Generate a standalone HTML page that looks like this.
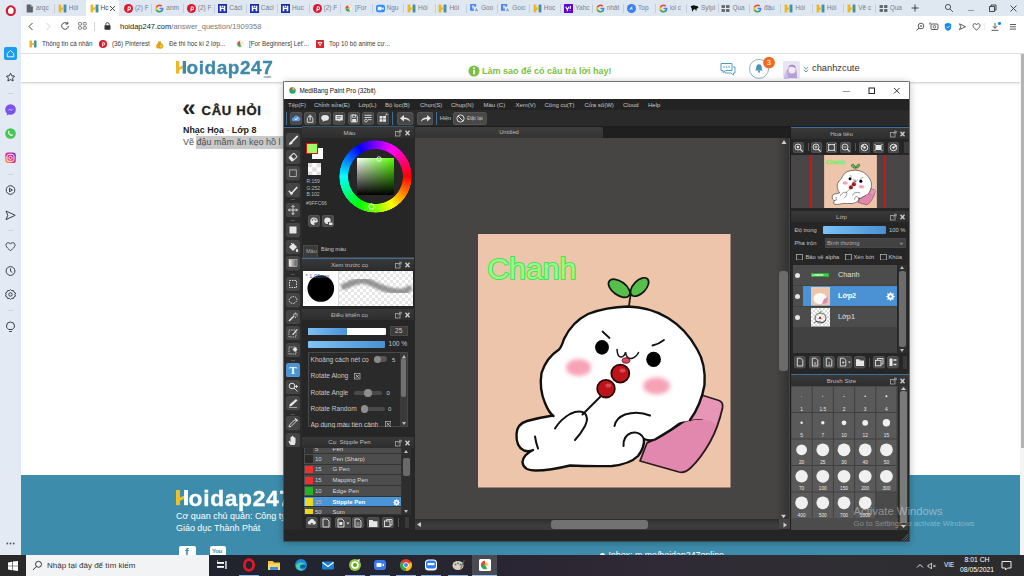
<!DOCTYPE html>
<html lang="vi">
<head>
<meta charset="utf-8">
<title>Hoidap247</title>
<style>
*{box-sizing:border-box;margin:0;padding:0}
html,body{width:1024px;height:576px;overflow:hidden;background:#fff;font-family:"Liberation Sans",sans-serif;}
#root{position:relative;width:1024px;height:576px;overflow:hidden;background:#fff}
#root div,#root svg,#root span{position:absolute;display:block}
.t{white-space:nowrap;line-height:1}
/* browser chrome */
#tabbar{left:0;top:0;width:1024px;height:16px;background:#dfe7f1}
#side{left:0;top:0;width:21px;height:555px;background:#e3eaf4}
.tab{top:0;height:16px;width:31px}
.tab .ic{left:0;top:4px;width:8px;height:8px}
.tab .tx{left:10.5px;top:5px;font-size:6.5px;color:#6d7380;white-space:nowrap;line-height:1;letter-spacing:-.1px}
.tsep{top:4px;width:1px;height:9px;background:#c6ced9}
#addr{left:21px;top:16px;width:1003px;height:20px;background:#fff}
#bm{left:21px;top:36px;width:1003px;height:18px;background:#fff;border-bottom:1px solid #e0e0e0}
.bmi{top:41px;font-size:6.3px;color:#3c3c3c;white-space:nowrap;line-height:1}
/* page */
#hdr{left:21px;top:54px;width:1003px;height:29px;background:#fff;border-bottom:1px solid #d9d9d9;box-shadow:0 1px 2px rgba(0,0,0,.10)}
#footer{left:21px;top:475px;width:999px;height:80px;background:#3e8cab}
#taskbar{left:0;top:555px;width:1024px;height:21px;background:linear-gradient(90deg,#1e222a 0%,#22252f 30%,#2a2532 50%,#2f2a35 65%,#2f2e33 82%,#2c2c2e 100%)}
</style>
</head>
<body>
<div id="root">
<div id="tabbar"></div>
<div style="left:86.400px;top:0;width:32.400px;height:16px;background:#fff;border-radius:2px 2px 0 0"></div>
<svg style="left:25.0px;top:3.5px;width:9px;height:9px" viewBox="0 0 16 16"><path d="M3 1h7l4 4v10H3z" fill="#5f6368"/><path d="M10 1v4h4z" fill="#9aa0a6"/></svg>
<span class="t" style="left:36.0px;top:5px;font-size:6.500px;color:#7a808c;width:16.500px;overflow:hidden">arqc</span>
<div class="tsep" style="left:54.0px"></div>
<svg style="left:57.5px;top:3.5px;width:9px;height:9px" viewBox="0 0 16 16"><rect x="1" y="1" width="5" height="14" fill="#e9b829"/><rect x="10" y="1" width="5" height="14" fill="#3b8fb0"/><path d="M5 7 L11 5 V9 L5 11z" fill="#e9b829"/></svg>
<span class="t" style="left:68.5px;top:5px;font-size:6.500px;color:#7a808c;width:16.500px;overflow:hidden">Hỏi </span>
<svg style="left:89.5px;top:3.5px;width:9px;height:9px" viewBox="0 0 16 16"><rect x="1" y="1" width="5" height="14" fill="#e9b829"/><rect x="10" y="1" width="5" height="14" fill="#3b8fb0"/><path d="M5 7 L11 5 V9 L5 11z" fill="#e9b829"/></svg>
<span class="t" style="left:100.5px;top:5px;font-size:6.500px;color:#444">Hc</span>
<svg style="left:109px;top:5px;width:7px;height:7px" viewBox="0 0 7 7"><path d="M1 1l5 5M6 1l-5 5" stroke="#333" stroke-width="0.900"/></svg>
<svg style="left:123.9px;top:3.5px;width:9px;height:9px" viewBox="0 0 16 16"><circle cx="8" cy="8" r="8" fill="#e0162b"/><path d="M6.800 13.200l.9-8.400h1.200a2.700 2.700 0 0 1 0 5.400H7.400" stroke="#fff" stroke-width="1.800" fill="none" stroke-linejoin="round"/></svg>
<span class="t" style="left:134.9px;top:5px;font-size:6.500px;color:#7a808c;width:16.500px;overflow:hidden">(2) F</span>
<div class="tsep" style="left:151.4px"></div>
<svg style="left:155.3px;top:3.5px;width:9px;height:9px" viewBox="0 0 16 16"><path d="M15 8.2c0-.5 0-1-.1-1.400H8v2.700h3.900c-.2 1-.7 1.700-1.500 2.200v1.900h2.400c1.400-1.300 2.200-3.200 2.200-5.400z" fill="#4285f4"/><path d="M8 15.300c2 0 3.700-.7 4.900-1.800l-2.400-1.900c-.7.400-1.500.7-2.500.7-1.900 0-3.600-1.300-4.100-3H1.400v1.900C2.600 13.700 5.100 15.300 8 15.300z" fill="#34a853"/><path d="M3.900 9.300c-.1-.4-.2-.9-.2-1.300s.1-.9.200-1.300V4.800H1.400C.9 5.800.6 6.900.6 8s.3 2.200.8 3.200l2.500-1.900z" fill="#fbbc05"/><path d="M8 3.600c1.100 0 2.100.4 2.800 1.100l2.100-2.100C11.700 1.400 10 .7 8 .7 5.100.7 2.600 2.300 1.400 4.800l2.500 1.900c.5-1.700 2.200-3.100 4.100-3.100z" fill="#ea4335"/></svg>
<span class="t" style="left:166.3px;top:5px;font-size:6.500px;color:#7a808c;width:16.500px;overflow:hidden">anm</span>
<div class="tsep" style="left:182.8px"></div>
<svg style="left:186.8px;top:3.5px;width:9px;height:9px" viewBox="0 0 16 16"><circle cx="8" cy="8" r="8" fill="#e0162b"/><path d="M6.800 13.200l.9-8.400h1.200a2.700 2.700 0 0 1 0 5.400H7.400" stroke="#fff" stroke-width="1.800" fill="none" stroke-linejoin="round"/></svg>
<span class="t" style="left:197.8px;top:5px;font-size:6.500px;color:#7a808c;width:16.500px;overflow:hidden">(2) F</span>
<div class="tsep" style="left:214.3px"></div>
<svg style="left:218.2px;top:3.5px;width:9px;height:9px" viewBox="0 0 16 16"><rect width="16" height="16" fill="#1c2fb0"/><path d="M3 3h3v10H3zM10 3h3v10h-3zM6 7h4v2H6z" fill="#fff"/><rect x="7" y="3" width="2" height="3" fill="#fff"/></svg>
<span class="t" style="left:229.2px;top:5px;font-size:6.500px;color:#7a808c;width:16.500px;overflow:hidden">Cácl</span>
<div class="tsep" style="left:245.8px"></div>
<svg style="left:249.7px;top:3.5px;width:9px;height:9px" viewBox="0 0 16 16"><rect width="16" height="16" fill="#1c2fb0"/><path d="M3 3h3v10H3zM10 3h3v10h-3zM6 7h4v2H6z" fill="#fff"/><rect x="7" y="3" width="2" height="3" fill="#fff"/></svg>
<span class="t" style="left:260.7px;top:5px;font-size:6.500px;color:#7a808c;width:16.500px;overflow:hidden">Cácl</span>
<div class="tsep" style="left:277.2px"></div>
<svg style="left:281.1px;top:3.5px;width:9px;height:9px" viewBox="0 0 16 16"><rect width="16" height="16" fill="#1c2fb0"/><path d="M3 3h3v10H3zM10 3h3v10h-3zM6 7h4v2H6z" fill="#fff"/><rect x="7" y="3" width="2" height="3" fill="#fff"/></svg>
<span class="t" style="left:292.1px;top:5px;font-size:6.500px;color:#7a808c;width:16.500px;overflow:hidden">Huc</span>
<div class="tsep" style="left:308.6px"></div>
<svg style="left:312.6px;top:3.5px;width:9px;height:9px" viewBox="0 0 16 16"><circle cx="8" cy="8" r="8" fill="#e0162b"/><path d="M6.800 13.200l.9-8.400h1.200a2.700 2.700 0 0 1 0 5.400H7.400" stroke="#fff" stroke-width="1.800" fill="none" stroke-linejoin="round"/></svg>
<span class="t" style="left:323.6px;top:5px;font-size:6.500px;color:#7a808c;width:16.500px;overflow:hidden">(2) F</span>
<div class="tsep" style="left:340.1px"></div>
<svg style="left:344.1px;top:3.5px;width:9px;height:9px" viewBox="0 0 16 16"><circle cx="8" cy="8" r="6.500" fill="#fff" stroke="#c9ccd2" stroke-width="1"/><path d="M8 2.500a5.500 5.500 0 0 0-5.500 5.500h5.500z" fill="#e04343"/><path d="M2.500 8a5.500 5.500 0 0 0 8.500 4.600L8 8z" fill="#3aa655"/><circle cx="9.500" cy="7" r="2" fill="#f2c230"/></svg>
<span class="t" style="left:355.1px;top:5px;font-size:6.500px;color:#7a808c;width:16.500px;overflow:hidden">[For</span>
<div class="tsep" style="left:371.6px"></div>
<svg style="left:375.5px;top:3.5px;width:9px;height:9px" viewBox="0 0 16 16"><rect x="0" y="1.500" width="16" height="13" rx="4" fill="#2d8cff"/><rect x="3" y="5" width="7" height="6" rx="1" fill="#fff"/><path d="M10.500 7.500l3-2v5l-3-2z" fill="#fff"/></svg>
<span class="t" style="left:386.5px;top:5px;font-size:6.500px;color:#7a808c;width:16.500px;overflow:hidden">Ngu</span>
<div class="tsep" style="left:403.0px"></div>
<svg style="left:407.0px;top:3.5px;width:9px;height:9px" viewBox="0 0 16 16"><rect x="1" y="1" width="5" height="14" fill="#e9b829"/><rect x="10" y="1" width="5" height="14" fill="#3b8fb0"/><path d="M5 7 L11 5 V9 L5 11z" fill="#e9b829"/></svg>
<span class="t" style="left:418.0px;top:5px;font-size:6.500px;color:#7a808c;width:16.500px;overflow:hidden">Hỏi </span>
<div class="tsep" style="left:434.5px"></div>
<svg style="left:438.4px;top:3.5px;width:9px;height:9px" viewBox="0 0 16 16"><rect x="1" y="1" width="5" height="14" fill="#e9b829"/><rect x="10" y="1" width="5" height="14" fill="#3b8fb0"/><path d="M5 7 L11 5 V9 L5 11z" fill="#e9b829"/></svg>
<span class="t" style="left:449.4px;top:5px;font-size:6.500px;color:#7a808c;width:16.500px;overflow:hidden">Hỏi </span>
<div class="tsep" style="left:465.9px"></div>
<svg style="left:469.9px;top:3.5px;width:9px;height:9px" viewBox="0 0 16 16"><rect x="0" y="0" width="11" height="12" rx="1" fill="#4a87ee"/><rect x="7" y="5" width="9" height="10" rx="1" fill="#e8eaed"/><path d="M3 3.500h5M5.500 2.500v1.500M4 4c.5 2 2 3.500 3.500 4M7 4c-.5 2-2 3.500-3.500 4" stroke="#fff" stroke-width="1.200" fill="none"/><path d="M9.500 13l2-5 2 5M10.200 11.500h2.600" stroke="#4a87ee" stroke-width="1.200" fill="none"/></svg>
<span class="t" style="left:480.9px;top:5px;font-size:6.500px;color:#7a808c;width:16.500px;overflow:hidden">Goo</span>
<div class="tsep" style="left:497.4px"></div>
<svg style="left:501.3px;top:3.5px;width:9px;height:9px" viewBox="0 0 16 16"><rect x="0" y="0" width="11" height="12" rx="1" fill="#4a87ee"/><rect x="7" y="5" width="9" height="10" rx="1" fill="#e8eaed"/><path d="M3 3.500h5M5.500 2.500v1.500M4 4c.5 2 2 3.500 3.500 4M7 4c-.5 2-2 3.500-3.500 4" stroke="#fff" stroke-width="1.200" fill="none"/><path d="M9.500 13l2-5 2 5M10.200 11.500h2.600" stroke="#4a87ee" stroke-width="1.200" fill="none"/></svg>
<span class="t" style="left:512.3px;top:5px;font-size:6.500px;color:#7a808c;width:16.500px;overflow:hidden">Goo:</span>
<div class="tsep" style="left:528.8px"></div>
<svg style="left:532.8px;top:3.5px;width:9px;height:9px" viewBox="0 0 16 16"><rect x="1" y="1" width="5" height="14" fill="#e9b829"/><rect x="10" y="1" width="5" height="14" fill="#3b8fb0"/><path d="M5 7 L11 5 V9 L5 11z" fill="#e9b829"/></svg>
<span class="t" style="left:543.8px;top:5px;font-size:6.500px;color:#7a808c;width:16.500px;overflow:hidden">Hoc</span>
<div class="tsep" style="left:560.2px"></div>
<svg style="left:564.2px;top:3.5px;width:9px;height:9px" viewBox="0 0 16 16"><rect width="16" height="16" rx="1" fill="#5f01d1"/><path d="M3 5l3 5v3M9 5l-3 5" stroke="#fff" stroke-width="2" fill="none"/><path d="M11.500 3l-.5 6M10.800 11.500v1" stroke="#fff" stroke-width="2" fill="none"/></svg>
<span class="t" style="left:575.2px;top:5px;font-size:6.500px;color:#7a808c;width:16.500px;overflow:hidden">Yahc</span>
<div class="tsep" style="left:591.7px"></div>
<svg style="left:595.6px;top:3.5px;width:9px;height:9px" viewBox="0 0 16 16"><path d="M15 8.2c0-.5 0-1-.1-1.400H8v2.700h3.900c-.2 1-.7 1.700-1.500 2.200v1.900h2.400c1.400-1.300 2.200-3.200 2.200-5.400z" fill="#4285f4"/><path d="M8 15.300c2 0 3.700-.7 4.900-1.800l-2.400-1.900c-.7.400-1.500.7-2.500.7-1.900 0-3.600-1.300-4.100-3H1.400v1.900C2.600 13.700 5.100 15.300 8 15.300z" fill="#34a853"/><path d="M3.900 9.300c-.1-.4-.2-.9-.2-1.300s.1-.9.200-1.300V4.800H1.400C.9 5.800.6 6.900.6 8s.3 2.200.8 3.200l2.500-1.900z" fill="#fbbc05"/><path d="M8 3.600c1.100 0 2.100.4 2.800 1.100l2.100-2.100C11.700 1.400 10 .7 8 .7 5.100.7 2.600 2.300 1.400 4.800l2.500 1.900c.5-1.700 2.200-3.100 4.100-3.100z" fill="#ea4335"/></svg>
<span class="t" style="left:606.6px;top:5px;font-size:6.500px;color:#7a808c;width:16.500px;overflow:hidden">nhât</span>
<div class="tsep" style="left:623.1px"></div>
<svg style="left:627.1px;top:3.5px;width:9px;height:9px" viewBox="0 0 16 16"><circle cx="8" cy="8" r="8" fill="#3b7ff0"/><path d="M4 11c1-4 3-6 6-7-1 2-1 4 1 7-2-2-4-2-7 0z" fill="#cfe0ff"/></svg>
<span class="t" style="left:638.1px;top:5px;font-size:6.500px;color:#7a808c;width:16.500px;overflow:hidden">Top</span>
<div class="tsep" style="left:654.6px"></div>
<svg style="left:658.5px;top:3.5px;width:9px;height:9px" viewBox="0 0 16 16"><path d="M15 8.2c0-.5 0-1-.1-1.400H8v2.700h3.900c-.2 1-.7 1.700-1.500 2.200v1.900h2.400c1.400-1.300 2.200-3.200 2.200-5.400z" fill="#4285f4"/><path d="M8 15.300c2 0 3.700-.7 4.900-1.800l-2.400-1.900c-.7.400-1.500.7-2.500.7-1.900 0-3.600-1.300-4.100-3H1.400v1.900C2.600 13.700 5.100 15.300 8 15.300z" fill="#34a853"/><path d="M3.900 9.300c-.1-.4-.2-.9-.2-1.300s.1-.9.200-1.300V4.800H1.400C.9 5.800.6 6.900.6 8s.3 2.200.8 3.200l2.500-1.900z" fill="#fbbc05"/><path d="M8 3.600c1.100 0 2.100.4 2.800 1.100l2.100-2.100C11.700 1.400 10 .7 8 .7 5.100.7 2.600 2.300 1.400 4.800l2.500 1.900c.5-1.700 2.200-3.100 4.100-3.100z" fill="#ea4335"/></svg>
<span class="t" style="left:669.5px;top:5px;font-size:6.500px;color:#7a808c;width:16.500px;overflow:hidden">lol c</span>
<div class="tsep" style="left:686.0px"></div>
<svg style="left:690.0px;top:3.5px;width:9px;height:9px" viewBox="0 0 16 16"><path d="M1 4l5-2 8 2 1 3-3 1-1 5-2-4-3 1-2 4-1-6z" fill="#111"/></svg>
<span class="t" style="left:701.0px;top:5px;font-size:6.500px;color:#7a808c;width:16.500px;overflow:hidden">Sylpl</span>
<div class="tsep" style="left:717.5px"></div>
<svg style="left:721.4px;top:3.5px;width:9px;height:9px" viewBox="0 0 16 16"><rect x="1" y="2" width="6" height="5" fill="#5f6368"/><rect x="9" y="2" width="6" height="5" fill="#5f6368"/><rect x="1" y="9" width="6" height="5" fill="#5f6368"/><rect x="9" y="9" width="6" height="5" fill="#5f6368"/></svg>
<span class="t" style="left:732.4px;top:5px;font-size:6.500px;color:#7a808c;width:16.500px;overflow:hidden">Qua</span>
<div class="tsep" style="left:748.9px"></div>
<svg style="left:752.9px;top:3.5px;width:9px;height:9px" viewBox="0 0 16 16"><path d="M15 8.2c0-.5 0-1-.1-1.400H8v2.700h3.900c-.2 1-.7 1.700-1.500 2.200v1.900h2.400c1.400-1.300 2.200-3.200 2.200-5.400z" fill="#4285f4"/><path d="M8 15.300c2 0 3.700-.7 4.900-1.800l-2.400-1.900c-.7.400-1.500.7-2.500.7-1.900 0-3.600-1.300-4.100-3H1.400v1.900C2.600 13.700 5.100 15.300 8 15.300z" fill="#34a853"/><path d="M3.900 9.300c-.1-.4-.2-.9-.2-1.300s.1-.9.200-1.300V4.800H1.400C.9 5.800.6 6.900.6 8s.3 2.200.8 3.200l2.500-1.900z" fill="#fbbc05"/><path d="M8 3.600c1.100 0 2.100.4 2.800 1.100l2.100-2.100C11.700 1.400 10 .7 8 .7 5.100.7 2.600 2.300 1.400 4.800l2.500 1.900c.5-1.700 2.200-3.100 4.100-3.100z" fill="#ea4335"/></svg>
<span class="t" style="left:763.9px;top:5px;font-size:6.500px;color:#7a808c;width:16.500px;overflow:hidden">đậu</span>
<div class="tsep" style="left:780.4px"></div>
<svg style="left:784.3px;top:3.5px;width:9px;height:9px" viewBox="0 0 16 16"><rect x="1" y="1" width="5" height="14" fill="#e9b829"/><rect x="10" y="1" width="5" height="14" fill="#3b8fb0"/><path d="M5 7 L11 5 V9 L5 11z" fill="#e9b829"/></svg>
<span class="t" style="left:795.3px;top:5px;font-size:6.500px;color:#7a808c;width:16.500px;overflow:hidden">Hỏi </span>
<div class="tsep" style="left:811.8px"></div>
<svg style="left:815.8px;top:3.5px;width:9px;height:9px" viewBox="0 0 16 16"><rect x="1" y="1" width="5" height="14" fill="#e9b829"/><rect x="10" y="1" width="5" height="14" fill="#3b8fb0"/><path d="M5 7 L11 5 V9 L5 11z" fill="#e9b829"/></svg>
<span class="t" style="left:826.8px;top:5px;font-size:6.500px;color:#7a808c;width:16.500px;overflow:hidden">Hỏi </span>
<div class="tsep" style="left:843.3px"></div>
<svg style="left:847.2px;top:3.5px;width:9px;height:9px" viewBox="0 0 16 16"><rect x="1" y="1" width="5" height="14" fill="#e9b829"/><rect x="10" y="1" width="5" height="14" fill="#3b8fb0"/><path d="M5 7 L11 5 V9 L5 11z" fill="#e9b829"/></svg>
<span class="t" style="left:858.2px;top:5px;font-size:6.500px;color:#7a808c;width:16.500px;overflow:hidden">Vẽ c</span>
<div class="tsep" style="left:874.8px"></div>
<svg style="left:878.7px;top:3.5px;width:9px;height:9px" viewBox="0 0 16 16"><rect x="1" y="2" width="6" height="5" fill="#5f6368"/><rect x="9" y="2" width="6" height="5" fill="#5f6368"/><rect x="1" y="9" width="6" height="5" fill="#5f6368"/><rect x="9" y="9" width="6" height="5" fill="#5f6368"/></svg>
<span class="t" style="left:889.7px;top:5px;font-size:6.500px;color:#7a808c;width:16.500px;overflow:hidden">Qua</span>
<svg style="left:910px;top:3px;width:10px;height:10px" viewBox="0 0 10 10"><path d="M5 1.500v7M1.500 5h7" stroke="#333" stroke-width="0.900"/></svg>
<svg style="left:944px;top:3px;width:10px;height:10px" viewBox="0 0 10 10"><circle cx="4" cy="4" r="2.600" stroke="#444" stroke-width="0.900" fill="none"/><path d="M6 6l3 3" stroke="#444" stroke-width="0.900"/></svg>
<div style="left:968px;top:10px;width:6px;height:1px;background:#999"></div>
<svg style="left:987px;top:3px;width:10px;height:10px" viewBox="0 0 10 10"><path d="M2.500 3.500h5v5h-5zM4 3.500v-1.500h5v5h-1.500" stroke="#333" stroke-width="0.900" fill="none"/></svg>
<svg style="left:1009px;top:4px;width:9px;height:9px" viewBox="0 0 9 9"><path d="M1.500 1.500l6 6M7.500 1.500l-6 6" stroke="#333" stroke-width="0.900"/></svg>
<div id="addr"></div>
<svg style="left:27px;top:22px;width:8px;height:9px" viewBox="0 0 8 9"><path d="M5.500 1L2 4.500 5.500 8" stroke="#333" stroke-width="0.900" fill="none"/></svg>
<svg style="left:44px;top:22px;width:8px;height:9px" viewBox="0 0 8 9"><path d="M2.500 1L6 4.500 2.500 8" stroke="#c8c8c8" stroke-width="0.900" fill="none"/></svg>
<svg style="left:60px;top:21px;width:10px;height:10px" viewBox="0 0 10 10"><path d="M8.300 5a3.300 3.300 0 1 1-1-2.400" stroke="#333" stroke-width="0.900" fill="none"/><path d="M7.800 0.800v2.200h-2.200" stroke="#333" stroke-width="0.900" fill="none"/></svg>
<svg style="left:78px;top:22px;width:9px;height:8px" viewBox="0 0 9 8"><rect x="0.500" y="0.500" width="3" height="2.600" rx="0.800" stroke="#444" stroke-width="0.700" fill="none"/><rect x="5.300" y="0.500" width="3" height="2.600" rx="0.800" stroke="#444" stroke-width="0.700" fill="none"/><rect x="0.500" y="4.600" width="3" height="2.600" rx="0.800" stroke="#444" stroke-width="0.700" fill="none"/><rect x="5.300" y="4.600" width="3" height="2.600" rx="0.800" stroke="#444" stroke-width="0.700" fill="none"/></svg>
<div style="left:94px;top:22px;width:1px;height:9px;background:#d5d5d5"></div>
<svg style="left:104px;top:22px;width:7px;height:8px" viewBox="0 0 7 8"><rect x="0.500" y="3.200" width="6" height="4.500" rx="0.600" fill="#333"/><path d="M1.800 3.500v-1.200a1.700 1.700 0 0 1 3.400 0v1.200" stroke="#333" stroke-width="0.900" fill="none"/></svg>
<span class="t" style="left:120px;top:23px;font-size:7.500px;color:#222">hoidap247.com<span style="position:static;display:inline;color:#777">/answer_question/1909358</span></span>
<svg style="left:914px;top:22px;width:110px;height:10px" viewBox="0 0 110 10"><circle cx="7" cy="4" r="2.800" stroke="#333" stroke-width="0.800" fill="none"/><path d="M5 6l-2.500 2.500" stroke="#333" stroke-width="0.900"/><path d="M6 4h2M7 3v2" stroke="#333" stroke-width="0.600"/><rect x="17" y="2" width="7" height="5.500" rx="1" stroke="#333" stroke-width="0.800" fill="none"/><circle cx="20.500" cy="4.800" r="1.300" stroke="#333" stroke-width="0.700" fill="none"/><path d="M15.800 2.500v-1.500h1.500" stroke="#333" stroke-width="0.700" fill="none"/><path d="M34 0.800l3.200 1.200v3c0 2-1.500 3.300-3.200 4-1.700-.7-3.200-2-3.200-4v-3z" fill="#1a8cf0"/><path d="M32.500 4.800l1.100 1.100 2-2.100" stroke="#fff" stroke-width="0.800" fill="none"/><path d="M45.500 1.800l6 2.900-6 2.900 1.200-2.900z" stroke="#333" stroke-width="0.800" fill="none" stroke-linejoin="round"/><path d="M62.500 8c-3-2-3.500-3.500-3.500-4.600 0-2 2.600-2.400 3.500-.6.900-1.800 3.500-1.400 3.500.6 0 1.100-.5 2.600-3.500 4.600z" stroke="#333" stroke-width="0.800" fill="none"/><rect x="70.500" y="1" width="0.600" height="7" fill="#ddd"/><path d="M81 1v5M78.800 4.200L81 6.400l2.200-2.200M77.500 8.300h7" stroke="#333" stroke-width="0.800" fill="none"/><circle cx="85.500" cy="1.500" r="1.600" fill="#1a8cf0"/><path d="M96 2.500h6M96 4.800h6M96 7.100h6" stroke="#333" stroke-width="0.800"/></svg>
<div id="bm"></div>
<svg style="left:29px;top:40px;width:8px;height:8px" viewBox="0 0 16 16"><rect x="1" y="1" width="5" height="14" fill="#e9b829"/><rect x="10" y="1" width="5" height="14" fill="#3b8fb0"/><path d="M5 7 L11 5 V9 L5 11z" fill="#e9b829"/></svg>
<span class="bmi" style="left:42px">Thông tin cá nhân</span>
<svg style="left:99px;top:40px;width:8px;height:8px" viewBox="0 0 16 16"><circle cx="8" cy="8" r="8" fill="#e0162b"/><path d="M6.800 13.200l.9-8.400h1.200a2.700 2.700 0 0 1 0 5.400H7.400" stroke="#fff" stroke-width="1.800" fill="none" stroke-linejoin="round"/></svg>
<span class="bmi" style="left:112px">(36) Pinterest</span>
<svg style="left:155px;top:40px;width:9px;height:9px" viewBox="0 0 16 16"><path d="M5 5c0-2 6-2 6 0l2 3c2 3 1 7-2 7H5c-3 0-4-4-2-7z" fill="#e2a81e"/><circle cx="11" cy="11" r="3.500" fill="#f4c63d" stroke="#b7820b" stroke-width=".8"/><path d="M6 2l2 2 2-2" stroke="#b7820b" stroke-width="1.500" fill="none"/></svg>
<span class="bmi" style="left:169px">Đề thi học kì 2 lớp...</span>
<svg style="left:236px;top:40px;width:8px;height:8px" viewBox="0 0 16 16"><circle cx="8" cy="8" r="6.500" fill="#fff" stroke="#c9ccd2" stroke-width="1"/><path d="M8 2.500a5.500 5.500 0 0 0-5.500 5.500h5.500z" fill="#e04343"/><path d="M2.500 8a5.500 5.500 0 0 0 8.500 4.600L8 8z" fill="#3aa655"/><circle cx="9.500" cy="7" r="2" fill="#f2c230"/></svg>
<span class="bmi" style="left:249px">[For Beginners] Let'...</span>
<svg style="left:316px;top:40px;width:8px;height:8px" viewBox="0 0 16 16"><rect x="0" y="0" width="16" height="16" rx="1" fill="#d8262c"/><path d="M3 4h10l-5 9z" fill="#fff"/><path d="M6 6h4l-2 4z" fill="#d8262c"/></svg>
<span class="bmi" style="left:329px">Top 10 bộ anime cự...</span>
<div id="hdr"></div>
<svg style="left:176px;top:60.8px;width:11px;height:13.7px" viewBox="0 0 11 13.7"><rect x="0" y="0" width="3.30" height="12.65" fill="#ecb922"/><path d="M3.10 6.33 L6.90 4.55 V7.34 L3.10 9.11z" fill="#ecb922"/><rect x="6.70" y="0" width="3.30" height="12.65" fill="#3f8aa8"/></svg>
<span class="t" style="left:186.6px;top:58.78px;font-size:19px;font-weight:bold;color:#3f8aa8;letter-spacing:0.55px;transform:scaleY(0.93);transform-origin:0 0;-webkit-text-stroke:.35px #3f8aa8">oidap247</span>
<span class="t" style="left:263px;top:75.500px;font-size:3.500px;font-weight:bold;color:#3f8aa8">.com</span>
<svg style="left:468px;top:64.500px;width:12px;height:12px" viewBox="0 0 12 12"><circle cx="6" cy="6" r="5.500" fill="#7cc043"/><rect x="5.200" y="5" width="1.700" height="4.300" fill="#fff"/><circle cx="6" cy="3.300" r="1" fill="#fff"/></svg>
<span class="t" style="left:482px;top:66.500px;font-size:9px;font-weight:bold;color:#7cc043">Làm sao để có câu trả lời hay!</span>
<svg style="left:720px;top:62px;width:16px;height:14px" viewBox="0 0 16 14"><path d="M5 9.500v1.500h6l2.500 2v-2h1.500v-6h-2" stroke="#4d9bc0" stroke-width="0.900" fill="#fff"/><path d="M1 1.500h11v7H5.500L3 10.500v-2H1z" stroke="#4d9bc0" stroke-width="1" fill="#fff" stroke-linejoin="round"/><circle cx="4" cy="5" r=".8" fill="#4d9bc0"/><circle cx="6.500" cy="5" r=".8" fill="#4d9bc0"/><circle cx="9" cy="5" r=".8" fill="#4d9bc0"/></svg>
<svg style="left:748px;top:56px;width:28px;height:24px" viewBox="0 0 28 24"><circle cx="11" cy="12.900" r="9.500" stroke="#5b93a8" stroke-width="0.700" fill="#fff"/><g transform="translate(11 12.500) scale(.84) translate(-11 -12.500)"><path d="M11 7.500c2.200 0 3.300 1.700 3.300 3.800 0 2 .5 3 1.500 3.700H6.200c1-.7 1.500-1.700 1.500-3.700 0-2.100 1.100-3.800 3.300-3.800z" fill="#4a94b4"/><circle cx="11" cy="16.300" r="1.300" fill="#4a94b4"/></g><circle cx="21" cy="6.600" r="5.900" fill="#f26a21"/></svg>
<span class="t" style="left:766.800px;top:58.800px;font-size:7.500px;color:#fff">3</span>
<svg style="left:783px;top:61px;width:17px;height:18px" viewBox="0 0 17 18"><rect width="17" height="18" rx="2" fill="#e9e4f3"/><path d="M3 17c0-6 1-11 5-12 5-1 6 4 6 12z" fill="#b7a3dc"/><circle cx="9" cy="9" r="3.500" fill="#f3e9ee"/><path d="M1 18c0-4 1-8 3-9l1 9z" fill="#cfc2ea"/><path d="M5 6c2-3 7-3 8 1-2-1-5-2-8-1z" fill="#9b86cf"/></svg>
<svg style="left:803px;top:66px;width:6px;height:7px" viewBox="0 0 6 7"><path d="M.8 1l2.200 2.200L5.200 1M.8 3.800l2.200 2.200 2.200-2.200" stroke="#4b8b9f" stroke-width="0.900" fill="none"/></svg>
<span class="t" style="left:812px;top:64px;font-size:9.300px;color:#333">chanhzcute</span>
<span class="t" style="left:182.300px;top:95.600px;font-size:24px;font-weight:bold;color:#222">«</span>
<span class="t" style="left:201.500px;top:103.700px;font-size:13.100px;font-weight:bold;color:#222;letter-spacing:.7px;-webkit-text-stroke:.3px #222">CÂU HỎI</span>
<span class="t" style="left:183px;top:125.500px;font-size:8.900px;font-weight:bold;color:#222">Nhạc Họa <span style="position:static;display:inline;font-weight:normal;color:#888">·</span> Lớp 8</span>
<div style="left:196px;top:136px;width:88px;height:12.800px;background:#c9c9c9"></div>
<span class="t" style="left:183px;top:137.900px;font-size:9px;color:#505050">Vẽ đậu mầm ăn kẹo hồ l</span>
<div style="left:1020px;top:54px;width:4px;height:501px;background:#f4f4f4"></div>
<div style="left:1020.500px;top:54px;width:3.500px;height:394px;background:#b4b4b4"></div>
<div id="footer"></div>
<svg style="left:176px;top:490px;width:13px;height:16.2px" viewBox="0 0 13 16.2"><rect x="0" y="0" width="3.96" height="15.18" fill="#f0c02a"/><path d="M3.76 7.59 L8.24 5.47 V8.81 L3.76 10.93z" fill="#f0c02a"/><rect x="8.04" y="0" width="3.96" height="15.18" fill="#fff"/></svg>
<span class="t" style="left:188.6px;top:487.57px;font-size:22.8px;font-weight:bold;color:#fff;letter-spacing:0.66px;transform:scaleY(0.93);transform-origin:0 0;-webkit-text-stroke:.35px #fff">oidap247</span>
<span class="t" style="left:176px;top:511.700px;font-size:8.950px;color:#fff">Cơ quan chủ quản: Công ty</span>
<span class="t" style="left:176px;top:523.900px;font-size:8.950px;color:#fff">Giáo dục Thành Phát</span>
<div style="left:179px;top:546px;width:17px;height:12px;background:#fff;border-radius:2px"></div>
<span class="t" style="left:185px;top:547px;font-size:11px;font-weight:bold;color:#3e8cab">f</span>
<div style="left:210px;top:546px;width:16px;height:12px;background:#fff;border-radius:2px"></div>
<span class="t" style="left:212px;top:547.500px;font-size:6px;font-weight:bold;color:#3e8cab;letter-spacing:-.3px">You</span>
<div style="left:599.500px;top:552.500px;width:5px;height:5px;border-radius:3px;background:#fff"></div>
<span class="t" style="left:608.500px;top:550.500px;font-size:8.800px;color:#fff">Inbox: m.me/hoidap247online</span>
<div id="side"></div>
<svg style="left:0;top:0;width:21px;height:555px" viewBox="0 0 21 555"><ellipse cx="10.800" cy="10.700" rx="4" ry="4.300" fill="#fff" stroke="#d8142c" stroke-width="2.200"/><ellipse cx="10.800" cy="10.700" rx="2" ry="3.400" fill="#fff"/><rect x="4" y="47" width="13" height="13" rx="2" fill="#1c9bf0"/><path d="M7.300 53.500l3.200-3 3.200 3v3.300H7.300z" stroke="#fff" stroke-width="0.900" fill="none" stroke-linejoin="round"/><path d="M10.500 73.200l1.300 2.600 2.800.3-2 2 .5 2.900-2.600-1.400-2.600 1.400.5-2.900-2-2 2.800-.3z" stroke="#3b3f46" stroke-width="1" fill="none" stroke-linejoin="round"/><rect x="8" y="93" width="5" height="0.800" fill="#c3cbd6"/><circle cx="10.500" cy="109.500" r="5.300" fill="#7a52f4"/><path d="M7.500 111.200l2.200-2.500 1.500 1.300 2.300-1.800-2.200 2.600-1.500-1.300z" fill="#fff"/><path d="M7 113.500l-.3 2 2-1z" fill="#7a52f4"/><circle cx="10.500" cy="133.500" r="5.300" fill="#45c655"/><path d="M8.300 131.200c.3-.5.900-.4 1 .1l.3.900-.5.600c.5.900 1.100 1.500 2 2l.6-.5.900.3c.5.100.6.700.1 1-2.100 1.300-5.700-2.300-4.400-4.400z" fill="#fff"/><defs><linearGradient id="ig" x1="0" y1="1" x2="1" y2="0"><stop offset="0" stop-color="#f9c234"/><stop offset=".45" stop-color="#ee2a7b"/><stop offset="1" stop-color="#6a2ed8"/></linearGradient></defs><rect x="5.200" y="152.500" width="10.600" height="10.600" rx="2.800" fill="url(#ig)"/><rect x="7" y="154.300" width="7" height="7" rx="2" stroke="#fff" stroke-width="0.900" fill="none"/><circle cx="10.500" cy="157.800" r="1.600" stroke="#fff" stroke-width="0.900" fill="none"/><rect x="8" y="174" width="5" height="0.800" fill="#c3cbd6"/><circle cx="10.500" cy="190" r="4.300" stroke="#3b3f46" stroke-width="1" fill="none"/><path d="M9.500 188.200l2.800 1.800-2.800 1.800z" stroke="#3b3f46" stroke-width="1" fill="none" stroke-width="0.800"/><path d="M6 211l9.200 4.300L6 219.600l1.800-4.300z" stroke="#3b3f46" stroke-width="1" fill="none" stroke-linejoin="round"/><rect x="8" y="230" width="5" height="0.800" fill="#c3cbd6"/><path d="M10.500 250.500c-3.600-2.400-4.500-4.200-4.500-5.600 0-2.500 3.300-3 4.500-.8 1.200-2.200 4.500-1.700 4.500.8 0 1.400-.9 3.200-4.500 5.600z" stroke="#3b3f46" stroke-width="1" fill="none"/><circle cx="10.500" cy="271" r="4.400" stroke="#3b3f46" stroke-width="1" fill="none"/><path d="M10.500 268.300v2.900l1.800 1.200" stroke="#3b3f46" stroke-width="1" fill="none"/><circle cx="10.500" cy="294.500" r="1.700" stroke="#3b3f46" stroke-width="1" fill="none"/><path d="M10.500 289.500l1.200 1.200 1.700-.2.600 1.600 1.500.9-.6 1.500.6 1.600-1.500.8-.6 1.600-1.700-.2-1.200 1.200-1.200-1.200-1.700.2-.6-1.600-1.500-.8.600-1.600-.6-1.500 1.500-.9.600-1.600 1.700.2z" stroke="#3b3f46" stroke-width="1" fill="none" stroke-width="0.800" stroke-linejoin="round"/><rect x="8" y="310" width="5" height="0.800" fill="#c3cbd6"/><path d="M8.800 329.500c-1.500-1-2.300-2-2.300-3.500a4 4 0 0 1 8 0c0 1.500-.8 2.500-2.300 3.500z" stroke="#3b3f46" stroke-width="1" fill="none"/><path d="M9.200 331.500h2.600" stroke="#3b3f46" stroke-width="1" fill="none"/><circle cx="7.300" cy="543.500" r="0.900" fill="#555"/><circle cx="10.500" cy="543.500" r="0.900" fill="#555"/><circle cx="13.700" cy="543.500" r="0.900" fill="#555"/></svg>
<div style="left:284px;top:82px;width:625px;height:459px;background:#262626;box-shadow:0 1px 8px rgba(0,0,0,.33),0 0 0 .7px #4a4a4a"></div>
<div style="left:284px;top:82px;width:625px;height:17px;background:#fff;"></div>
<svg style="left:288.8px;top:87.2px;width:7px;height:7px" viewBox="0 0 7 7"><circle cx="3.500" cy="3.500" r="3.200" fill="#1fa86c"/><path d="M3.500 .3A3.200 3.200 0 0 0 .5 2.600L3.500 3.500z" fill="#e04848"/><path d="M3.500 .3a3.200 3.200 0 0 1 2.800 1.700L3.500 3.500z" fill="#f0c23a"/><circle cx="3.700" cy="3.900" r="1.500" fill="#22b074"/></svg>
<span class="t" style="left:299.5px;top:88.3px;font-size:6.35px;color:#111;">MediBang Paint Pro (32bit)</span>
<div style="left:843px;top:91px;width:7px;height:1px;background:#999;"></div>
<svg style="left:868px;top:87px;width:8px;height:8px" viewBox="0 0 8 8"><rect x="1" y="1" width="5.500" height="5.500" stroke="#222" stroke-width="1" fill="none"/></svg>
<svg style="left:893px;top:87px;width:8px;height:8px" viewBox="0 0 8 8"><path d="M1 1l5.500 5.500M6.500 1L1 6.500" stroke="#222" stroke-width="0.900"/></svg>
<div style="left:284px;top:99px;width:625px;height:11px;background:#232323;"></div>
<span class="t" style="left:288px;top:101.7px;font-size:6.0px;color:#c6c6c6;">Tệp(F)</span>
<span class="t" style="left:314px;top:101.7px;font-size:6.0px;color:#c6c6c6;">Chỉnh sửa(E)</span>
<span class="t" style="left:358.5px;top:101.7px;font-size:6.0px;color:#c6c6c6;">Lớp(L)</span>
<span class="t" style="left:385px;top:101.7px;font-size:6.0px;color:#c6c6c6;">Bộ lọc(B)</span>
<span class="t" style="left:420px;top:101.7px;font-size:6.0px;color:#c6c6c6;">Chọn(S)</span>
<span class="t" style="left:451px;top:101.7px;font-size:6.0px;color:#c6c6c6;">Chụp(N)</span>
<span class="t" style="left:483.5px;top:101.7px;font-size:6.0px;color:#c6c6c6;">Màu (C)</span>
<span class="t" style="left:515.5px;top:101.7px;font-size:6.0px;color:#c6c6c6;">Xem(V)</span>
<span class="t" style="left:544.5px;top:101.7px;font-size:6.0px;color:#c6c6c6;">Công cụ(T)</span>
<span class="t" style="left:584.5px;top:101.7px;font-size:6.0px;color:#c6c6c6;">Cửa sổ(W)</span>
<span class="t" style="left:623px;top:101.7px;font-size:6.0px;color:#c6c6c6;">Cloud</span>
<span class="t" style="left:648px;top:101.7px;font-size:6.0px;color:#c6c6c6;">Help</span>
<div style="left:284px;top:110px;width:625px;height:17px;background:#2a2a2a;"></div>
<div style="left:284px;top:126px;width:625px;height:1px;background:#1d1d1d;"></div>
<div style="left:286px;top:112px;width:1px;height:13px;background:#3d6f98;"></div>
<svg style="left:289.7px;top:112.3px;width:12.2px;height:12.7px" viewBox="0 0 12.2 12.7"><rect x="0.500" y="0.500" width="11.2" height="11.7" rx="1.500" fill="#484848" stroke="#5c5c5c" stroke-width="0.800"/><path d="M3.600 9.300a1.900 1.900 0 0 1 .2-3.800 2.700 2.700 0 0 1 5.100-.3 2.100 2.100 0 0 1-.3 4.100z" fill="#5b9ce4"/><path d="M4.700 6.700l1.200 1.200 2.200-2.500" stroke="#fff" stroke-width="1" fill="none"/></svg>
<svg style="left:304.2px;top:112.3px;width:12.2px;height:12.7px" viewBox="0 0 12.2 12.7"><rect x="0.500" y="0.500" width="11.2" height="11.7" rx="1.500" fill="#484848" stroke="#5c5c5c" stroke-width="0.800"/><path d="M3.300 10.300V6.800L4.800 4.200h2.600L8.900 6.800v3.500z" stroke="#e6e6e6" stroke-width="0.900" fill="none" stroke-linejoin="round"/><path d="M6.100 2.600v5.800" stroke="#e6e6e6" stroke-width="1"/></svg>
<svg style="left:318.9px;top:112.3px;width:12.2px;height:12.7px" viewBox="0 0 12.2 12.7"><rect x="0.500" y="0.500" width="11.2" height="11.7" rx="1.500" fill="#484848" stroke="#5c5c5c" stroke-width="0.800"/><ellipse cx="6.100" cy="5.800" rx="3.900" ry="2.900" fill="#e6e6e6"/><path d="M4 7.600l-.4 2.500 2.600-1.900z" fill="#e6e6e6"/></svg>
<svg style="left:333.4px;top:112.3px;width:12.2px;height:12.7px" viewBox="0 0 12.2 12.7"><rect x="0.500" y="0.500" width="11.2" height="11.7" rx="1.500" fill="#484848" stroke="#5c5c5c" stroke-width="0.800"/><rect x="2.400" y="3" width="7.400" height="5.400" rx=".5" fill="#e6e6e6"/><path d="M3.800 4.700h4.600M3.800 6.300h3.400" stroke="#4a4a4a" stroke-width=".8"/><path d="M5.200 8.300l.9 1.600.9-1.600z" fill="#e6e6e6"/></svg>
<svg style="left:347.9px;top:112.3px;width:12.2px;height:12.7px" viewBox="0 0 12.2 12.7"><rect x="0.500" y="0.500" width="11.2" height="11.7" rx="1.500" fill="#484848" stroke="#5c5c5c" stroke-width="0.800"/><path d="M3 3h5.300l1 1v6H3z" fill="none" stroke="#e6e6e6" stroke-width="0.800"/><rect x="4.300" y="3" width="3.200" height="2.300" fill="none" stroke="#e6e6e6" stroke-width=".7"/><rect x="4.200" y="7" width="3.800" height="3" fill="#e6e6e6"/></svg>
<svg style="left:362.2px;top:112.3px;width:12.2px;height:12.7px" viewBox="0 0 12.2 12.7"><rect x="0.500" y="0.500" width="11.2" height="11.7" rx="1.500" fill="#484848" stroke="#5c5c5c" stroke-width="0.800"/><path d="M2.600 3.300h7M2.600 5.500h7M6 7.700h3.600" stroke="#e6e6e6" stroke-width="0.900"/><circle cx="4" cy="8.600" r="1.400" fill="none" stroke="#e6e6e6" stroke-width=".8"/></svg>
<svg style="left:376.5px;top:112.3px;width:12.2px;height:12.7px" viewBox="0 0 12.2 12.7"><rect x="0.500" y="0.500" width="11.2" height="11.7" rx="1.500" fill="#484848" stroke="#5c5c5c" stroke-width="0.800"/><rect x="2.600" y="4" width="2.900" height="2.600" fill="#e6e6e6"/><rect x="6.100" y="4" width="2.900" height="2.600" fill="#e6e6e6"/><rect x="2.600" y="7.200" width="2.900" height="2.600" fill="#e6e6e6"/><rect x="6.100" y="7.200" width="2.900" height="2.600" fill="#e6e6e6"/><path d="M8.200 3.400l1.800-1.300M8.700 2h1.400v1.400" stroke="#e6e6e6" stroke-width=".6" fill="none"/></svg>
<div style="left:392px;top:112px;width:1px;height:13px;background:#3d6f98;"></div>
<svg style="left:397px;top:112px;width:16.5px;height:13px" viewBox="0 0 16.5 13"><rect x="0.500" y="0.500" width="15.5" height="12" rx="1.500" fill="#484848" stroke="#5c5c5c" stroke-width="0.800"/><path d="M13 10c0-3-2-4.500-6-4.500V3L3 6.300l4 3.300V7.300c2.500 0 4.500.5 6 2.700z" fill="#e6e6e6"/></svg>
<svg style="left:416.5px;top:112px;width:16.5px;height:13px" viewBox="0 0 16.5 13"><rect x="0.500" y="0.500" width="15.5" height="12" rx="1.500" fill="#484848" stroke="#5c5c5c" stroke-width="0.800"/><path d="M4 10c0-3 2-4.500 6-4.500V3l4 3.300-4 3.300V7.300c-2.500 0-4.500.5-6 2.700z" fill="#e6e6e6"/></svg>
<div style="left:436px;top:112px;width:1px;height:13px;background:#3d6f98;"></div>
<span class="t" style="left:439.7px;top:116px;font-size:5.6px;color:#c4c4c4;">Hiện</span>
<svg style="left:453px;top:112px;width:33.8px;height:13px" viewBox="0 0 33.8 13"><rect x="0.500" y="0.500" width="32.8" height="12" rx="1.500" fill="#484848" stroke="#5c5c5c" stroke-width="0.800"/><circle cx="7.500" cy="6.500" r="3.600" stroke="#e6e6e6" stroke-width="0.900" fill="none"/><path d="M5 4l5 5" stroke="#e6e6e6" stroke-width="0.900"/></svg>
<span class="t" style="left:467px;top:116px;font-size:5.6px;color:#c4c4c4;">Đặt lại</span>
<div style="left:284px;top:127px;width:18px;height:402px;background:#2b2b2b;"></div>
<div style="left:284px;top:127px;width:18px;height:1.3px;background:#3d6f98;"></div>
<svg style="left:286px;top:133.2px;width:14px;height:14.4px" viewBox="0 0 14 14.4"><rect x="0.500" y="0.500" width="13" height="13.4" rx="1.500" fill="#444444" stroke="#4a4a4a" stroke-width="0.800"/><path d="M6.300 8.400L11.200 3.400" stroke="#e6e6e6" stroke-width="1.900" stroke-linecap="round"/><path d="M2.800 11.700c.2-1.700 1.100-2.900 2.600-3.400l1.500 1.500c-.6 1.400-2.100 2.100-4.100 1.900z" fill="#e6e6e6"/></svg>
<svg style="left:286px;top:150.0px;width:14px;height:14.4px" viewBox="0 0 14 14.4"><rect x="0.500" y="0.500" width="13" height="13.4" rx="1.500" fill="#444444" stroke="#4a4a4a" stroke-width="0.800"/><g transform="rotate(-42 7 7.200)"><rect x="3.600" y="4.700" width="6.800" height="5" rx=".9" fill="none" stroke="#e6e6e6" stroke-width="1"/><rect x="3.600" y="4.700" width="2.800" height="5" rx=".6" fill="#e6e6e6"/></g></svg>
<svg style="left:286px;top:166.4px;width:14px;height:14.4px" viewBox="0 0 14 14.4"><rect x="0.500" y="0.500" width="13" height="13.4" rx="1.500" fill="#444444" stroke="#4a4a4a" stroke-width="0.800"/><rect x="3.700" y="3.900" width="6.600" height="6.600" stroke="#b4b4b4" stroke-width="0.900" fill="none"/></svg>
<svg style="left:286px;top:183.2px;width:14px;height:14.4px" viewBox="0 0 14 14.4"><rect x="0.500" y="0.500" width="13" height="13.4" rx="1.500" fill="#444444" stroke="#4a4a4a" stroke-width="0.800"/><path d="M2.800 7.800l2.600 2.800L11.200 4" stroke="#e6e6e6" stroke-width="1.500" fill="none"/><circle cx="5.400" cy="10.400" r="1.300" fill="#e6e6e6"/></svg>
<svg style="left:286px;top:203.0px;width:14px;height:14.4px" viewBox="0 0 14 14.4"><rect x="0.500" y="0.500" width="13" height="13.4" rx="1.500" fill="#444444" stroke="#4a4a4a" stroke-width="0.800"/><path d="M7 2.500v9M2.500 7h9M5.500 4l1.500-1.500L8.500 4M5.500 10l1.500 1.500L8.500 10M4 5.500L2.500 7 4 8.500M10 5.500L11.500 7 10 8.500" stroke="#e6e6e6" stroke-width="0.900" fill="none"/></svg>
<svg style="left:286px;top:223.3px;width:14px;height:14.4px" viewBox="0 0 14 14.4"><rect x="0.500" y="0.500" width="13" height="13.4" rx="1.500" fill="#444444" stroke="#4a4a4a" stroke-width="0.800"/><rect x="3.500" y="3.500" width="7" height="7" fill="#e6e6e6"/></svg>
<svg style="left:286px;top:239.8px;width:14px;height:14.4px" viewBox="0 0 14 14.4"><rect x="0.500" y="0.500" width="13" height="13.4" rx="1.500" fill="#444444" stroke="#4a4a4a" stroke-width="0.800"/><path d="M3 7l4-4 4 4-4 4z" fill="#e6e6e6"/><path d="M11 8.500c.8 1 1.200 1.700 1.200 2.300a1.200 1.200 0 0 1-2.400 0c0-.6.400-1.300 1.200-2.300z" fill="#e6e6e6"/><path d="M5 3l2 2" stroke="#e6e6e6" stroke-width=".9"/></svg>
<svg style="left:286px;top:256.4px;width:14px;height:14.4px" viewBox="0 0 14 14.4"><rect x="0.500" y="0.500" width="13" height="13.4" rx="1.500" fill="#444444" stroke="#4a4a4a" stroke-width="0.800"/><defs><linearGradient id="gr1" x1="0" x2="1"><stop offset="0" stop-color="#eee"/><stop offset="1" stop-color="#555"/></linearGradient></defs><rect x="3" y="3.500" width="8" height="7" fill="url(#gr1)" stroke="#ddd" stroke-width=".5"/></svg>
<svg style="left:286px;top:276.6px;width:14px;height:14.4px" viewBox="0 0 14 14.4"><rect x="0.500" y="0.500" width="13" height="13.4" rx="1.500" fill="#444444" stroke="#4a4a4a" stroke-width="0.800"/><rect x="3.500" y="3.500" width="7" height="7" stroke="#e6e6e6" stroke-width="0.900" stroke-dasharray="1.500 1" fill="none"/></svg>
<svg style="left:286px;top:293.3px;width:14px;height:14.4px" viewBox="0 0 14 14.4"><rect x="0.500" y="0.500" width="13" height="13.4" rx="1.500" fill="#444444" stroke="#4a4a4a" stroke-width="0.800"/><ellipse cx="7" cy="7" rx="4" ry="3.300" stroke="#e6e6e6" stroke-width="0.900" stroke-dasharray="1.500 1" fill="none" transform="rotate(-20 7 7)"/></svg>
<svg style="left:286px;top:309.9px;width:14px;height:14.4px" viewBox="0 0 14 14.4"><rect x="0.500" y="0.500" width="13" height="13.4" rx="1.500" fill="#444444" stroke="#4a4a4a" stroke-width="0.800"/><path d="M3 11l5-5" stroke="#e6e6e6" stroke-width="1.400"/><path d="M9.500 2.500v2M9.500 6.500v1.500M7 4.800h1.800M10.300 4.800H12M7.800 3l.8.800M11.200 3l-.8.800M11.200 6.600l-.8-.8" stroke="#e6e6e6" stroke-width=".7"/></svg>
<svg style="left:286px;top:326.1px;width:14px;height:14.4px" viewBox="0 0 14 14.4"><rect x="0.500" y="0.500" width="13" height="13.4" rx="1.500" fill="#444444" stroke="#4a4a4a" stroke-width="0.800"/><rect x="3" y="4" width="7" height="7" stroke="#e6e6e6" stroke-width="0.800" stroke-dasharray="1.300 1" fill="none"/><path d="M6 8.500L11 3l.8.800L7 9.200z" fill="#e6e6e6"/></svg>
<svg style="left:286px;top:342.5px;width:14px;height:14.4px" viewBox="0 0 14 14.4"><rect x="0.500" y="0.500" width="13" height="13.4" rx="1.500" fill="#444444" stroke="#4a4a4a" stroke-width="0.800"/><rect x="3" y="4" width="7" height="7" stroke="#e6e6e6" stroke-width="0.800" stroke-dasharray="1.300 1" fill="none"/><path d="M6.500 6.500L9 4l2.500 2.500L9 9z" fill="#e6e6e6"/></svg>
<svg style="left:286px;top:362.8px;width:14px;height:14.4px" viewBox="0 0 14 14.4"><rect x="0.500" y="0.500" width="13" height="13.4" rx="1.500" fill="#4a95d6" stroke="#5aa2e0" stroke-width="0.800"/><text x="7" y="11" text-anchor="middle" font-family="Liberation Serif, serif" font-size="11" font-weight="bold" fill="#fff">T</text></svg>
<svg style="left:286px;top:379.8px;width:14px;height:14.4px" viewBox="0 0 14 14.4"><rect x="0.500" y="0.500" width="13" height="13.4" rx="1.500" fill="#444444" stroke="#4a4a4a" stroke-width="0.800"/><circle cx="6" cy="6" r="2.800" stroke="#e6e6e6" stroke-width="1" fill="none"/><path d="M8 8l3.500 3.500M9 6.500h3M10.500 5v3" stroke="#e6e6e6" stroke-width=".9"/></svg>
<svg style="left:286px;top:396.4px;width:14px;height:14.4px" viewBox="0 0 14 14.4"><rect x="0.500" y="0.500" width="13" height="13.4" rx="1.500" fill="#444444" stroke="#4a4a4a" stroke-width="0.800"/><path d="M3 10.500l1-2.500L10 3l1.500 1.500L5.500 10z" fill="#e6e6e6"/><path d="M3 11.500h8" stroke="#e6e6e6" stroke-width=".6"/></svg>
<svg style="left:286px;top:416.4px;width:14px;height:14.4px" viewBox="0 0 14 14.4"><rect x="0.500" y="0.500" width="13" height="13.4" rx="1.500" fill="#444444" stroke="#4a4a4a" stroke-width="0.800"/><path d="M3 11l.5-2L8.500 4l1.500 1.500L5 10.500z" stroke="#e6e6e6" stroke-width="0.900" fill="none"/><path d="M8.500 3l1-1 2.500 2.500-1 1z" fill="#e6e6e6"/></svg>
<svg style="left:286px;top:433.1px;width:14px;height:14.4px" viewBox="0 0 14 14.4"><rect x="0.500" y="0.500" width="13" height="13.4" rx="1.500" fill="#444444" stroke="#4a4a4a" stroke-width="0.800"/><path d="M4.500 12c-1-1.500-2-3-2-4l1-.3 1 1.300V4.300c0-.8 1.200-.8 1.200 0V3.300c0-.8 1.300-.8 1.300 0v.7c0-.8 1.300-.8 1.300 0v1c0-.8 1.200-.8 1.200 0V9c0 1.500-.5 2.300-1 3z" fill="#e6e6e6"/></svg>
<div style="left:291px;top:199.3px;width:4px;height:1px;background:#555;"></div>
<div style="left:291px;top:220.4px;width:4px;height:1px;background:#555;"></div>
<div style="left:291px;top:273.5px;width:4px;height:1px;background:#555;"></div>
<div style="left:291px;top:360.4px;width:4px;height:1px;background:#555;"></div>
<div style="left:291px;top:413.5px;width:4px;height:1px;background:#555;"></div>
<div style="left:302px;top:127px;width:113px;height:131px;background:#262626;"></div>
<div style="left:302px;top:127px;width:112px;height:11px;background:linear-gradient(#383838,#2e2e2e);"></div>
<span class="t" style="left:302px;top:129.5px;font-size:6.1px;color:#bdbdbd;width:95px;text-align:center">Màu</span>
<svg style="left:395px;top:129px;width:16px;height:8px" viewBox="0 0 16 8"><rect x="0.500" y="2.500" width="4.500" height="4.500" stroke="#aaa" stroke-width="0.800" fill="none"/><path d="M3 4.500l3-3M4 1.200h2.200v2.200" stroke="#aaa" stroke-width="0.800" fill="none"/><path d="M10.500 1.800l4 4.400M14.500 1.800l-4 4.400" stroke="#d0d0d0" stroke-width="1.300"/></svg>
<div style="left:302px;top:126.3px;width:112px;height:1px;background:#33566f;"></div>
<div style="left:312px;top:148.2px;width:10.8px;height:10.5px;background:#fff;"></div>
<div style="left:306.2px;top:143px;width:11.5px;height:10.8px;background:#9ffc66;border:1.300px solid #d41414"></div>
<svg style="left:308.4px;top:162.8px;width:12.5px;height:12.3px" viewBox="0 0 12.5 12.3"><rect width="13" height="13" fill="#fff"/><rect x="0" y="0" width="4.300" height="4.300" fill="#ddd"/><rect x="8.600" y="0" width="4.400" height="4.300" fill="#ddd"/><rect x="4.300" y="4.300" width="4.300" height="4.300" fill="#ddd"/><rect x="0" y="8.600" width="4.300" height="4.400" fill="#ddd"/><rect x="8.600" y="8.600" width="4.400" height="4.400" fill="#ddd"/></svg>
<span class="t" style="left:306.5px;top:179px;font-size:5px;color:#bbb;">R:159</span>
<span class="t" style="left:306.5px;top:185.5px;font-size:5px;color:#bbb;">G:252</span>
<span class="t" style="left:306.5px;top:192px;font-size:5px;color:#bbb;">B:102</span>
<span class="t" style="left:306px;top:201px;font-size:5px;color:#bbb;">#9FFC66</span>
<svg style="left:308px;top:214.5px;width:12px;height:12px" viewBox="0 0 12 12"><rect x="0.500" y="0.500" width="11" height="11" rx="1.500" fill="#484848" stroke="#5c5c5c" stroke-width="0.800"/><path d="M6 2.500a3.700 3.700 0 1 0 0 7.400c.8 0 .8-.8.500-1.200-.4-.6 0-1.200.7-1.200H8.500A1.700 1.700 0 0 0 9.800 6C9.800 4 8 2.500 6 2.500z" fill="#e6e6e6"/><circle cx="4.300" cy="5" r=".7" fill="#444"/><circle cx="6" cy="4" r=".7" fill="#444"/><circle cx="7.800" cy="5" r=".7" fill="#444"/></svg>
<svg style="left:321.5px;top:214.5px;width:12px;height:12px" viewBox="0 0 12 12"><rect x="0.500" y="0.500" width="11" height="11" rx="1.500" fill="#484848" stroke="#5c5c5c" stroke-width="0.800"/><path d="M5.500 2.500a3.200 3.200 0 1 0 0 6.400c.7 0 .7-.7.400-1-.3-.5 0-1 .6-1H7.700A1.500 1.500 0 0 0 8.800 5.500C8.800 3.800 7.200 2.500 5.500 2.500z" fill="#e6e6e6"/><rect x="7" y="7.500" width="3.500" height="2.500" fill="#e6e6e6"/></svg>
<div style="left:338.500px;top:139.500px;width:73px;height:73px;border-radius:50%;background:conic-gradient(from 90deg,#ff0000,#ffff00,#00ff00,#00ffff,#0000ff,#ff00ff,#ff0000);-webkit-mask:radial-gradient(circle closest-side,transparent 74%,#000 76%,#000 98%,transparent 100%);mask:radial-gradient(circle closest-side,transparent 74%,#000 76%,#000 98%,transparent 100%)"></div>
<div style="left:357px;top:157.500px;width:37px;height:37.500px;background:linear-gradient(to top,#000,rgba(0,0,0,0)),linear-gradient(to right,#fff,#56ff00)"></div>
<svg style="left:375.5px;top:156px;width:6px;height:6px" viewBox="0 0 6 6"><circle cx="3" cy="3" r="2.200" stroke="#fff" stroke-width="0.900" fill="none"/></svg>
<svg style="left:367.8px;top:203.2px;width:7px;height:7px" viewBox="0 0 7 7"><circle cx="3.500" cy="3.500" r="2.600" stroke="#fff" stroke-width="1" fill="none"/></svg>
<div style="left:303px;top:244.5px;width:15px;height:12px;background:#3a3a3a;border:1px solid #4a4a4a;border-bottom:none"></div>
<span class="t" style="left:306px;top:248.5px;font-size:5.5px;color:#aaa;">Màu</span>
<span class="t" style="left:321px;top:247px;font-size:5.5px;color:#c4c4c4;">Bảng màu</span>
<div style="left:302px;top:256.5px;width:112px;height:1px;background:#444;"></div>
<div style="left:302px;top:259px;width:112px;height:11px;background:linear-gradient(#383838,#2e2e2e);"></div>
<div style="left:302px;top:258px;width:112px;height:1px;background:#3d6f98;"></div>
<span class="t" style="left:302px;top:261.5px;font-size:6.1px;color:#bdbdbd;width:95px;text-align:center">Xem trước cọ</span>
<svg style="left:395px;top:261px;width:16px;height:8px" viewBox="0 0 16 8"><rect x="0.500" y="2.500" width="4.500" height="4.500" stroke="#aaa" stroke-width="0.800" fill="none"/><path d="M3 4.500l3-3M4 1.200h2.200v2.200" stroke="#aaa" stroke-width="0.800" fill="none"/><path d="M10.500 1.800l4 4.400M14.500 1.800l-4 4.400" stroke="#d0d0d0" stroke-width="1.300"/></svg>
<div style="left:302px;top:270px;width:112px;height:36px;background:#262626;"></div>
<svg style="left:302.5px;top:270.5px;width:110.5px;height:35.5px" viewBox="0 0 110.5 35.5"><defs><pattern id="ck" width="6" height="6" patternUnits="userSpaceOnUse"><rect width="6" height="6" fill="#fff"/><rect width="3" height="3" fill="#e6e6e6"/><rect x="3" y="3" width="3" height="3" fill="#e6e6e6"/></pattern><filter id="bl2"><feGaussianBlur stdDeviation="1.300"/></filter></defs><rect width="110.500" height="35.500" fill="#fff"/><rect x="35.500" y="0" width="75" height="35.500" fill="url(#ck)"/><rect x="35" y="0" width=".6" height="35.500" fill="#ccc"/><circle cx="17.800" cy="17.500" r="13.300" fill="#000"/><path d="M41 15.500 C48 12.500 53 9.500 60 9.500 S76 18 91 20 S102 19.500 106 17.500" stroke="#777" stroke-width="6.300" fill="none" stroke-linecap="round" opacity=".75" filter="url(#bl2)"/><text x="2.500" y="6.500" font-family="Liberation Sans, sans-serif" font-size="5.600" fill="#3f6db5">* 1.00mm</text></svg>
<div style="left:302px;top:309px;width:112px;height:11px;background:linear-gradient(#383838,#2e2e2e);"></div>
<span class="t" style="left:302px;top:311.5px;font-size:6.1px;color:#bdbdbd;width:95px;text-align:center">Điều khiển cọ</span>
<svg style="left:395px;top:311px;width:16px;height:8px" viewBox="0 0 16 8"><rect x="0.500" y="2.500" width="4.500" height="4.500" stroke="#aaa" stroke-width="0.800" fill="none"/><path d="M3 4.500l3-3M4 1.200h2.200v2.200" stroke="#aaa" stroke-width="0.800" fill="none"/><path d="M10.500 1.800l4 4.400M14.500 1.800l-4 4.400" stroke="#d0d0d0" stroke-width="1.300"/></svg>
<div style="left:302px;top:320px;width:112px;height:116px;background:#262626;"></div>
<div style="left:307.5px;top:327.5px;width:78.5px;height:7.5px;background:#fff;border-radius:1px"></div>
<div style="left:307.5px;top:327.5px;width:39.5px;height:7.5px;background:linear-gradient(90deg,#7cc0f4,#4b93d8);"></div>
<div style="left:390px;top:326px;width:17.5px;height:10px;background:#3c3c3c;border:1px solid #4a4a4a"></div>
<span class="t" style="left:390px;top:328.3px;font-size:6.6px;color:#c8c8c8;width:17.500px;text-align:center">25</span>
<div style="left:307.5px;top:340.5px;width:77.5px;height:7.5px;background:linear-gradient(90deg,#80c4f6,#4a8fd2);border-radius:1px"></div>
<span class="t" style="left:388.5px;top:341.3px;font-size:6.6px;color:#c8c8c8;">100 %</span>
<div style="left:307.5px;top:352px;width:100px;height:75px;background:#2a2a2a;border:1px solid #484848"></div>
<div style="left:399.5px;top:353px;width:7.5px;height:73px;background:#3a3a3a;"></div>
<div style="left:400.5px;top:357.5px;width:5.5px;height:39px;background:#707070;border-radius:2px"></div>
<svg style="left:400.5px;top:353.5px;width:6px;height:5px" viewBox="0 0 6 5"><path d="M1 4l2-3 2 3z" fill="#bbb"/></svg>
<svg style="left:400.5px;top:421px;width:6px;height:5px" viewBox="0 0 6 5"><path d="M1 1l2 3 2-3z" fill="#bbb"/></svg>
<span class="t" style="left:310.5px;top:356.5px;font-size:6.6px;color:#c8c8c8;">Khoảng cách nét cọ</span>
<div style="left:374px;top:356px;width:13px;height:6px;background:#555;border-radius:3px"></div>
<div style="left:374px;top:355.5px;width:7px;height:7px;background:#8a8a8a;border-radius:50%"></div>
<span class="t" style="left:392px;top:356.5px;font-size:6px;color:#c8c8c8;">5</span>
<span class="t" style="left:310.5px;top:373px;font-size:6.6px;color:#c8c8c8;">Rotate Along</span>
<svg style="left:354px;top:373px;width:6.5px;height:6.5px" viewBox="0 0 6.5 6.5"><rect x="0.500" y="0.500" width="5.500" height="5.500" stroke="#bbb" stroke-width="0.700" fill="none"/><path d="M1.800 1.800l3 3M4.800 1.800l-3 3" stroke="#ddd" stroke-width="0.800"/></svg>
<span class="t" style="left:310.5px;top:389.5px;font-size:6.6px;color:#c8c8c8;">Rotate Angle</span>
<div style="left:353.5px;top:390.5px;width:28.5px;height:4.5px;background:#4a4a4a;border-radius:2px"></div>
<div style="left:364px;top:389px;width:7.5px;height:7.5px;background:#8e8e8e;border-radius:50%"></div>
<span class="t" style="left:386.5px;top:389.5px;font-size:6px;color:#c8c8c8;">0</span>
<span class="t" style="left:310.5px;top:405.5px;font-size:6.6px;color:#c8c8c8;">Rotate Random</span>
<div style="left:360.5px;top:406.5px;width:24px;height:4.5px;background:#4a4a4a;border-radius:2px"></div>
<div style="left:360.5px;top:405px;width:7.5px;height:7.5px;background:#8e8e8e;border-radius:50%"></div>
<span class="t" style="left:388px;top:405.5px;font-size:6px;color:#c8c8c8;">0</span>
<span class="t" style="left:310.5px;top:421.5px;font-size:6.6px;color:#c8c8c8;height:6px;overflow:hidden">Áp dụng màu tiền cảnh</span>
<svg style="left:384.5px;top:421px;width:6.5px;height:6px" viewBox="0 0 6.5 6"><rect x="0.500" y="0.500" width="5.500" height="5.500" stroke="#bbb" stroke-width="0.700" fill="none"/><path d="M1.800 1.800l3 3M4.800 1.800l-3 3" stroke="#ddd" stroke-width="0.800"/></svg>
<div style="left:302px;top:436.5px;width:112px;height:11px;background:linear-gradient(#383838,#2e2e2e);"></div>
<span class="t" style="left:302px;top:439.0px;font-size:6.1px;color:#bdbdbd;width:95px;text-align:center">Cọ: Stipple Pen</span>
<svg style="left:395px;top:438.5px;width:16px;height:8px" viewBox="0 0 16 8"><rect x="0.500" y="2.500" width="4.500" height="4.500" stroke="#aaa" stroke-width="0.800" fill="none"/><path d="M3 4.500l3-3M4 1.200h2.200v2.200" stroke="#aaa" stroke-width="0.800" fill="none"/><path d="M10.500 1.800l4 4.400M14.500 1.800l-4 4.400" stroke="#d0d0d0" stroke-width="1.300"/></svg>
<div style="left:302px;top:447.5px;width:112px;height:82px;background:#262626;"></div>
<div style="left:303.5px;top:447.5px;width:98px;height:67px;background:#333;"></div>
<div style="left:303.500px;top:447.5px;width:97.500px;height:5.800000000000022px;background:#4d4d4d;overflow:hidden"><div style="left:1.500px;top:-2.5px;width:7.500px;height:7.500px;background:#333"></div><span class="t" style="left:11.500px;top:-2.0px;font-size:6px;color:#d0d0d0">5</span><span class="t" style="left:29px;top:-2.0px;font-size:6px;color:#d8d8d8;">Pen</span></div>
<div style="left:303.500px;top:454.1px;width:97.500px;height:9.7px;background:#4d4d4d;overflow:hidden"><div style="left:1.500px;top:1.3999999999999773px;width:7.500px;height:7.500px;background:#2a2a2a"></div><span class="t" style="left:11.500px;top:1.8999999999999773px;font-size:6px;color:#d0d0d0">10</span><span class="t" style="left:29px;top:1.8999999999999773px;font-size:6px;color:#d8d8d8;">Pen (Sharp)</span></div>
<div style="left:303.500px;top:464.6px;width:97.500px;height:9.7px;background:#4d4d4d;overflow:hidden"><div style="left:1.500px;top:1.3999999999999773px;width:7.500px;height:7.500px;background:#f03030"></div><span class="t" style="left:11.500px;top:1.8999999999999773px;font-size:6px;color:#d0d0d0">15</span><span class="t" style="left:29px;top:1.8999999999999773px;font-size:6px;color:#d8d8d8;">G Pen</span></div>
<div style="left:303.500px;top:475.40000000000003px;width:97.500px;height:9.7px;background:#4d4d4d;overflow:hidden"><div style="left:1.500px;top:1.3999999999999773px;width:7.500px;height:7.500px;background:#f03030"></div><span class="t" style="left:11.500px;top:1.8999999999999773px;font-size:6px;color:#d0d0d0">15</span><span class="t" style="left:29px;top:1.8999999999999773px;font-size:6px;color:#d8d8d8;">Mapping Pen</span></div>
<div style="left:303.500px;top:486.1px;width:97.500px;height:9.7px;background:#4d4d4d;overflow:hidden"><div style="left:1.500px;top:1.3999999999999773px;width:7.500px;height:7.500px;background:#22b422"></div><span class="t" style="left:11.500px;top:1.8999999999999773px;font-size:6px;color:#d0d0d0">10</span><span class="t" style="left:29px;top:1.8999999999999773px;font-size:6px;color:#d8d8d8;">Edge Pen</span></div>
<div style="left:303.500px;top:496.8px;width:97.500px;height:9.7px;background:#4a95d8;overflow:hidden"><div style="left:1.500px;top:1.3999999999999773px;width:7.500px;height:7.500px;background:#e8d820"></div><span class="t" style="left:11.500px;top:1.8999999999999773px;font-size:6px;color:#e8a0a0">25</span><span class="t" style="left:29px;top:1.8999999999999773px;font-size:6px;color:#fff;font-weight:bold">Stipple Pen</span></div>
<div style="left:303.500px;top:507.4px;width:97.500px;height:7.100000000000023px;background:#4d4d4d;overflow:hidden"><div style="left:1.500px;top:1.3999999999999773px;width:7.500px;height:7.500px;background:#e8d820"></div><span class="t" style="left:11.500px;top:1.8999999999999773px;font-size:6px;color:#d0d0d0">50</span><span class="t" style="left:29px;top:1.8999999999999773px;font-size:6px;color:#d8d8d8;">Sum</span></div>
<svg style="left:392.5px;top:498.5px;width:7px;height:7px" viewBox="0 0 7 7"><circle cx="3.500" cy="3.500" r="1.800" stroke="#fff" stroke-width="1.400" fill="none"/><path d="M3.500 .3v6.400M.3 3.500h6.400M1.200 1.200l4.600 4.600M5.800 1.200L1.200 5.800" stroke="#fff" stroke-width=".9"/><circle cx="3.500" cy="3.500" r="1" fill="#4a95d8"/></svg>
<div style="left:402px;top:447.5px;width:8.5px;height:67px;background:#2e2e2e;"></div>
<div style="left:403px;top:458px;width:6.5px;height:18px;background:#6a6a6a;border-radius:2px"></div>
<svg style="left:403px;top:448.5px;width:6px;height:5px" viewBox="0 0 6 5"><path d="M1 4l2-3 2 3z" fill="#bbb"/></svg>
<svg style="left:403px;top:508.5px;width:6px;height:5px" viewBox="0 0 6 5"><path d="M1 1l2 3 2-3z" fill="#bbb"/></svg>
<svg style="left:306px;top:516.5px;width:11.5px;height:11.5px" viewBox="0 0 11.5 11.5"><rect x="0.500" y="0.500" width="10.5" height="10.5" rx="1.500" fill="#484848" stroke="#5c5c5c" stroke-width="0.800"/><path d="M3 7.500a2 2 0 0 1 .5-3.800 2.600 2.600 0 0 1 5 .3 1.800 1.800 0 0 1 0 3.500z" fill="#e6e6e6"/><path d="M5.800 9.500V6M4.500 7.300l1.300-1.300 1.300 1.300" stroke="#444" stroke-width=".9" fill="none"/></svg>
<svg style="left:319.8px;top:516.5px;width:11.5px;height:11.5px" viewBox="0 0 11.5 11.5"><rect x="0.500" y="0.500" width="10.5" height="10.5" rx="1.500" fill="#484848" stroke="#5c5c5c" stroke-width="0.800"/><path d="M3 2h4l2 2v6H3z" fill="none" stroke="#e6e6e6" stroke-width="0.900"/></svg>
<svg style="left:334.5px;top:516.5px;width:16.3px;height:11.5px" viewBox="0 0 16.3 11.5"><rect x="0.500" y="0.500" width="15.3" height="10.5" rx="1.500" fill="#484848" stroke="#5c5c5c" stroke-width="0.800"/><path d="M3 2h4l2 2v6H3z" fill="none" stroke="#e6e6e6" stroke-width="0.900"/><rect x="4.300" y="5" width="3" height="3" fill="#e6e6e6"/><path d="M11.500 5.500l1.500 2 1.500-2z" fill="#e6e6e6"/></svg>
<svg style="left:352.3px;top:516.5px;width:11.7px;height:11.5px" viewBox="0 0 11.7 11.5"><rect x="0.500" y="0.500" width="10.7" height="10.5" rx="1.500" fill="#484848" stroke="#5c5c5c" stroke-width="0.800"/><path d="M3 2h4l2 2v6H3z" fill="none" stroke="#e6e6e6" stroke-width="0.900"/><path d="M4.500 6h3M4.500 7.800h3" stroke="#e6e6e6" stroke-width=".7"/></svg>
<svg style="left:367px;top:516.5px;width:12.5px;height:11.5px" viewBox="0 0 12.5 11.5"><rect x="0.500" y="0.500" width="11.5" height="10.5" rx="1.500" fill="#484848" stroke="#5c5c5c" stroke-width="0.800"/><path d="M2 3h3.500l1 1.200H10.500V10H2z" fill="#e6e6e6"/></svg>
<svg style="left:381.8px;top:516.5px;width:11.8px;height:11.5px" viewBox="0 0 11.8 11.5"><rect x="0.500" y="0.500" width="10.8" height="10.5" rx="1.500" fill="#484848" stroke="#5c5c5c" stroke-width="0.800"/><rect x="2.500" y="4" width="5.500" height="5.500" fill="none" stroke="#e6e6e6" stroke-width="0.900"/><path d="M4.500 4V2.500H10V8H8" fill="none" stroke="#e6e6e6" stroke-width="0.900"/></svg>
<div style="left:397.5px;top:518px;width:1px;height:9px;background:#555;"></div>
<div style="left:405px;top:517px;width:4px;height:11px;background:#3a3a3a;"></div>
<div style="left:415px;top:127px;width:376px;height:402px;background:#474544;"></div>
<div style="left:415px;top:127px;width:494px;height:11px;background:#1f1f1f;"></div>
<div style="left:415px;top:127px;width:188px;height:10.5px;background:linear-gradient(#3e3e3e,#333);border-radius:0 2px 0 0"></div>
<span class="t" style="left:415px;top:129.5px;font-size:5.8px;color:#bdbdbd;width:188px;text-align:center">Untitled</span>
<svg style="left:478px;top:234px;width:253px;height:254px" viewBox="478 234 253 254"><defs><filter id="bl" x="-30%" y="-30%" width="160%" height="160%"><feGaussianBlur stdDeviation="2"/></filter></defs><rect x="478" y="234" width="252.500" height="253.500" fill="#edc5aa"/>
<path d="M703 395.500 L719 400.500 Q723.500 402 722.500 408 Q718 428 710 442 Q701 458 691 467.500 Q685 473.500 679 472 L640 461 L647 443 Q670 425 703 395.500z" fill="#e287ad" stroke="#2a1a20" stroke-width="1.800" stroke-linejoin="round"/>
<path d="M648 443 Q668 433 683 422.500 Q694 418 703 419.500" fill="none" stroke="#2a1a20" stroke-width="1.200"/>
<path d="M703 396.500 L718.500 401.500 Q722 403 721 408 Q719 416 716 424 Q709 419 703 419.500 Q694 418 684 422 Q696 410 703 396.500z" fill="#e896b8"/>
<path d="M553 415.500 Q540 417.500 527 421 Q517 424 516.500 434 Q516 447 524 450.500 Q529 452 533 450 Q523 455 522.500 462 Q523 470.500 536 470.500 Q550 470.500 570 465.500 Q590 466.500 612 466 Q630 464 638 456 Q644.500 448 644 439 Q650 441.500 655 439.500 Q672 430 686 419 Q697 408 702 395 L640 380 L560 395z" fill="#fff" stroke="#111" stroke-width="2.400" stroke-linejoin="round"/>
<path d="M628 306.500 Q606 307 588 314 Q572 322 564 339 Q561.500 347 559 349.500 Q546 358 541.500 373 Q539 389 545 403 Q549 413 553.500 416 L600 440 L690 420 Q701 405 704.500 385 Q706 364 697 349 Q686 329 668 318 Q650 307 628 306.500z" fill="#fff"/>
<path d="M553.500 416 Q549 413 545 403 Q539 389 541.500 373 Q546 358 559 349.500 Q561.500 347 564 339 Q572 322 588 314 Q606 307 628 306.500 Q650 307 668 318 Q686 329 697 349 Q706 364 704.500 385 Q701 405 690 420" fill="none" stroke="#111" stroke-width="2.400" stroke-linecap="round"/>
<path d="M556 412 L600 400 L686 416 L650 436 L600 440 L560 425z" fill="#fff"/>
<path d="M614.500 426 Q616 418 625 414.500 Q638 410.500 650 415.500" fill="none" stroke="#111" stroke-width="2" stroke-linecap="round"/>
<path d="M623.500 446 Q623 436 631 433 Q640 431 644 439" fill="none" stroke="#111" stroke-width="2" stroke-linecap="round"/>
<path d="M555 428.500 Q561 419 570 414 Q580 409.500 585 413.500 Q589 418 585 426 Q581 433.500 575 440" fill="#fff" stroke="#111" stroke-width="2" stroke-linecap="round"/>
<path d="M535 436.500 Q536 443 538 448.500" fill="none" stroke="#111" stroke-width="2" stroke-linecap="round"/>
<path d="M629 306.500 Q629.500 300 630.800 294.500" fill="none" stroke="#111" stroke-width="1.700"/>
<ellipse cx="619.200" cy="288.300" rx="12.300" ry="6.800" transform="rotate(36 619.200 288.300)" fill="#56bf4b" stroke="#111" stroke-width="1.700"/>
<ellipse cx="639.600" cy="287" rx="11.300" ry="6.300" transform="rotate(-46 639.600 287)" fill="#56bf4b" stroke="#111" stroke-width="1.700"/>
<ellipse cx="578.500" cy="367.500" rx="12.500" ry="8.500" fill="#f7a3b6" filter="url(#bl)"/>
<ellipse cx="656.500" cy="386" rx="13.500" ry="8.500" fill="#f7a3b6" filter="url(#bl)"/>
<ellipse cx="602" cy="347.400" rx="6.900" ry="7.300" fill="#000"/>
<ellipse cx="653.600" cy="359.400" rx="7.400" ry="7.700" fill="#000"/>
<path d="M602.500 331.500 L609.500 338" stroke="#111" stroke-width="1.800" stroke-linecap="round"/>
<path d="M652.500 345.500 Q659 344 664 340" stroke="#111" stroke-width="1.800" stroke-linecap="round" fill="none"/>
<path d="M617 349.500 Q617.500 357.500 621.500 357 Q625 356 625.500 352 Q626.500 359.500 631.500 358.500 Q636.500 357 638.500 352.500" fill="none" stroke="#111" stroke-width="1.500" stroke-linecap="round"/>
<ellipse cx="626" cy="360.500" rx="4" ry="2.800" fill="#d84a5a" stroke="#5a1018" stroke-width=".8"/>
<path d="M601 396 L582.500 414.500" stroke="#111" stroke-width="2" stroke-linecap="round"/>
<circle cx="620.300" cy="373.600" r="9" fill="#bd141c" stroke="#2a0305" stroke-width="1.800"/>
<circle cx="606" cy="388.700" r="8.800" fill="#bd141c" stroke="#2a0305" stroke-width="1.800"/>
<ellipse cx="622.500" cy="370.500" rx="3" ry="2" fill="#e0525a" opacity=".8"/>
<ellipse cx="608.500" cy="385.500" rx="3" ry="2" fill="#e0525a" opacity=".8"/>
<text x="487.300" y="278.500" font-family="Liberation Sans, sans-serif" font-size="28.600" textLength="89" lengthAdjust="spacingAndGlyphs" fill="#a4f48a" stroke="#3be850" stroke-width="2" paint-order="stroke" stroke-linejoin="round">Chanh</text></svg>
<div style="left:776px;top:138px;width:13px;height:381px;background:linear-gradient(90deg,#474544,#3f3e3d 40%,#323232);"></div>
<div style="left:778.5px;top:270.5px;width:9.5px;height:100.5px;background:#6b6b6b;border-radius:3px"></div>
<svg style="left:780px;top:139px;width:8px;height:6px" viewBox="0 0 8 6"><path d="M1.500 5l2.500-4 2.500 4z" fill="#ccc"/></svg>
<svg style="left:779.5px;top:514px;width:7px;height:5px" viewBox="0 0 7 5"><path d="M1 .8l2.500 3.500 2.500-3.500z" fill="#ccc"/></svg>
<svg style="left:781.5px;top:522px;width:6px;height:6px" viewBox="0 0 6 6"><path d="M1.500 .5l3.500 2.500-3.500 2.500z" fill="#ccc"/></svg>
<div style="left:415px;top:519px;width:364px;height:10.5px;background:linear-gradient(#2e2e2e,#3e3e3e 60%,#3a3a3a);"></div>
<div style="left:551px;top:520px;width:96.5px;height:8.5px;background:#727272;border-radius:3px"></div>
<svg style="left:416px;top:521px;width:6px;height:7px" viewBox="0 0 6 7"><path d="M5 1L1 3.500 5 6z" fill="#ccc"/></svg>
<div style="left:284px;top:529.5px;width:625px;height:11.5px;background:#252525;"></div>
<div style="left:791px;top:127px;width:118px;height:403px;background:#262626;"></div>
<div style="left:790px;top:127px;width:1px;height:403px;background:#1c1c1c;"></div>
<div style="left:791px;top:128px;width:118px;height:11px;background:linear-gradient(#383838,#2e2e2e);"></div>
<div style="left:791px;top:127px;width:118px;height:1px;background:#3d6f98;"></div>
<span class="t" style="left:791px;top:130.5px;font-size:6.1px;color:#bdbdbd;width:101px;text-align:center">Hoa tiêu</span>
<svg style="left:890px;top:130px;width:16px;height:8px" viewBox="0 0 16 8"><rect x="0.500" y="2.500" width="4.500" height="4.500" stroke="#aaa" stroke-width="0.800" fill="none"/><path d="M3 4.500l3-3M4 1.200h2.200v2.200" stroke="#aaa" stroke-width="0.800" fill="none"/><path d="M10.500 1.800l4 4.400M14.500 1.800l-4 4.400" stroke="#d0d0d0" stroke-width="1.300"/></svg>
<svg style="left:793.3px;top:141.5px;width:11.2px;height:11.3px" viewBox="0 0 11.2 11.3"><rect x="0.500" y="0.500" width="10.2" height="10.3" rx="1.500" fill="#484848" stroke="#5c5c5c" stroke-width="0.800"/><circle cx="5" cy="5" r="3" stroke="#e6e6e6" stroke-width="0.900" fill="none"/><path d="M7.200 7.200l2.500 2.500" stroke="#e6e6e6" stroke-width="1.200"/><circle cx="5" cy="5" r="1.200" fill="#e6e6e6"/></svg>
<svg style="left:811.4px;top:141.5px;width:11.2px;height:11.3px" viewBox="0 0 11.2 11.3"><rect x="0.500" y="0.500" width="10.2" height="10.3" rx="1.500" fill="#484848" stroke="#5c5c5c" stroke-width="0.800"/><circle cx="5" cy="5" r="3" stroke="#e6e6e6" stroke-width="0.900" fill="none"/><path d="M7.200 7.200l2.500 2.500" stroke="#e6e6e6" stroke-width="1.200"/><path d="M3.500 5h3M5 3.500v3" stroke="#e6e6e6" stroke-width=".8"/></svg>
<svg style="left:825.8px;top:141.5px;width:11.2px;height:11.3px" viewBox="0 0 11.2 11.3"><rect x="0.500" y="0.500" width="10.2" height="10.3" rx="1.500" fill="#484848" stroke="#5c5c5c" stroke-width="0.800"/><rect x="2.500" y="2.500" width="6" height="6" fill="none" stroke="#e6e6e6" stroke-width=".8"/><path d="M1.500 1.500l2 2M9.500 1.500l-2 2M1.500 9.500l2-2M9.500 9.500l-2-2" stroke="#e6e6e6" stroke-width=".9"/></svg>
<svg style="left:839.7px;top:141.5px;width:11.2px;height:11.3px" viewBox="0 0 11.2 11.3"><rect x="0.500" y="0.500" width="10.2" height="10.3" rx="1.500" fill="#484848" stroke="#5c5c5c" stroke-width="0.800"/><circle cx="5" cy="5" r="3" stroke="#e6e6e6" stroke-width="0.900" fill="none"/><path d="M7.200 7.200l2.500 2.500" stroke="#e6e6e6" stroke-width="1.200"/><path d="M3.500 5h3" stroke="#e6e6e6" stroke-width=".8"/></svg>
<svg style="left:858.6px;top:141.5px;width:11.2px;height:11.3px" viewBox="0 0 11.2 11.3"><rect x="0.500" y="0.500" width="10.2" height="10.3" rx="1.500" fill="#484848" stroke="#5c5c5c" stroke-width="0.800"/><circle cx="5.500" cy="5.500" r="3.300" stroke="#e6e6e6" stroke-width="1" fill="none"/><circle cx="5.500" cy="5.500" r="1.300" fill="#e6e6e6"/><path d="M2 3l1.500 2.500L5 3.200z" fill="#e6e6e6"/></svg>
<svg style="left:873px;top:141.5px;width:11.2px;height:11.3px" viewBox="0 0 11.2 11.3"><rect x="0.500" y="0.500" width="10.2" height="10.3" rx="1.500" fill="#484848" stroke="#5c5c5c" stroke-width="0.800"/><rect x="2.500" y="3" width="6" height="5" fill="#e6e6e6"/><path d="M1.500 2l1.500 1.500M9.500 2L8 3.500M1.500 9L3 7.500M9.500 9L8 7.500" stroke="#e6e6e6" stroke-width=".9"/></svg>
<svg style="left:887.5px;top:141.5px;width:11.2px;height:11.3px" viewBox="0 0 11.2 11.3"><rect x="0.500" y="0.500" width="10.2" height="10.3" rx="1.500" fill="#484848" stroke="#5c5c5c" stroke-width="0.800"/><circle cx="5.500" cy="5.500" r="3.300" stroke="#e6e6e6" stroke-width="1" fill="none"/><circle cx="5.500" cy="5.500" r="1.300" fill="#e6e6e6"/><path d="M9 3L7.500 5.500 6 3.200z" fill="#e6e6e6"/></svg>
<div style="left:807.5px;top:143px;width:1px;height:8px;background:#555;"></div>
<div style="left:854.5px;top:143px;width:1px;height:8px;background:#555;"></div>
<div style="left:903.5px;top:141.5px;width:5px;height:11.3px;background:#3c3c3c;"></div>
<div style="left:791px;top:154.5px;width:118px;height:53px;background:#484646;"></div>
<svg style="left:823.500px;top:154.500px;width:53px;height:53px" viewBox="478 234 252.500 253.500"><defs><filter id="blb" x="-30%" y="-30%" width="160%" height="160%"><feGaussianBlur stdDeviation="2"/></filter></defs><rect x="478" y="234" width="252.500" height="253.500" fill="#edc5aa"/>
<path d="M703 395.500 L719 400.500 Q723.500 402 722.500 408 Q718 428 710 442 Q701 458 691 467.500 Q685 473.500 679 472 L640 461 L647 443 Q670 425 703 395.500z" fill="#e287ad" stroke="#2a1a20" stroke-width="1.800" stroke-linejoin="round"/>
<path d="M648 443 Q668 433 683 422.500 Q694 418 703 419.500" fill="none" stroke="#2a1a20" stroke-width="1.200"/>
<path d="M703 396.500 L718.500 401.500 Q722 403 721 408 Q719 416 716 424 Q709 419 703 419.500 Q694 418 684 422 Q696 410 703 396.500z" fill="#e896b8"/>
<path d="M553 415.500 Q540 417.500 527 421 Q517 424 516.500 434 Q516 447 524 450.500 Q529 452 533 450 Q523 455 522.500 462 Q523 470.500 536 470.500 Q550 470.500 570 465.500 Q590 466.500 612 466 Q630 464 638 456 Q644.500 448 644 439 Q650 441.500 655 439.500 Q672 430 686 419 Q697 408 702 395 L640 380 L560 395z" fill="#fff" stroke="#111" stroke-width="2.400" stroke-linejoin="round"/>
<path d="M628 306.500 Q606 307 588 314 Q572 322 564 339 Q561.500 347 559 349.500 Q546 358 541.500 373 Q539 389 545 403 Q549 413 553.500 416 L600 440 L690 420 Q701 405 704.500 385 Q706 364 697 349 Q686 329 668 318 Q650 307 628 306.500z" fill="#fff"/>
<path d="M553.500 416 Q549 413 545 403 Q539 389 541.500 373 Q546 358 559 349.500 Q561.500 347 564 339 Q572 322 588 314 Q606 307 628 306.500 Q650 307 668 318 Q686 329 697 349 Q706 364 704.500 385 Q701 405 690 420" fill="none" stroke="#111" stroke-width="2.400" stroke-linecap="round"/>
<path d="M556 412 L600 400 L686 416 L650 436 L600 440 L560 425z" fill="#fff"/>
<path d="M614.500 426 Q616 418 625 414.500 Q638 410.500 650 415.500" fill="none" stroke="#111" stroke-width="2" stroke-linecap="round"/>
<path d="M623.500 446 Q623 436 631 433 Q640 431 644 439" fill="none" stroke="#111" stroke-width="2" stroke-linecap="round"/>
<path d="M555 428.500 Q561 419 570 414 Q580 409.500 585 413.500 Q589 418 585 426 Q581 433.500 575 440" fill="#fff" stroke="#111" stroke-width="2" stroke-linecap="round"/>
<path d="M535 436.500 Q536 443 538 448.500" fill="none" stroke="#111" stroke-width="2" stroke-linecap="round"/>
<path d="M629 306.500 Q629.500 300 630.800 294.500" fill="none" stroke="#111" stroke-width="1.700"/>
<ellipse cx="619.200" cy="288.300" rx="12.300" ry="6.800" transform="rotate(36 619.200 288.300)" fill="#56bf4b" stroke="#111" stroke-width="1.700"/>
<ellipse cx="639.600" cy="287" rx="11.300" ry="6.300" transform="rotate(-46 639.600 287)" fill="#56bf4b" stroke="#111" stroke-width="1.700"/>
<ellipse cx="578.500" cy="367.500" rx="12.500" ry="8.500" fill="#f7a3b6" filter="url(#blb)"/>
<ellipse cx="656.500" cy="386" rx="13.500" ry="8.500" fill="#f7a3b6" filter="url(#blb)"/>
<ellipse cx="602" cy="347.400" rx="6.900" ry="7.300" fill="#000"/>
<ellipse cx="653.600" cy="359.400" rx="7.400" ry="7.700" fill="#000"/>
<path d="M602.500 331.500 L609.500 338" stroke="#111" stroke-width="1.800" stroke-linecap="round"/>
<path d="M652.500 345.500 Q659 344 664 340" stroke="#111" stroke-width="1.800" stroke-linecap="round" fill="none"/>
<path d="M617 349.500 Q617.500 357.500 621.500 357 Q625 356 625.500 352 Q626.500 359.500 631.500 358.500 Q636.500 357 638.500 352.500" fill="none" stroke="#111" stroke-width="1.500" stroke-linecap="round"/>
<ellipse cx="626" cy="360.500" rx="4" ry="2.800" fill="#d84a5a" stroke="#5a1018" stroke-width=".8"/>
<path d="M601 396 L582.500 414.500" stroke="#111" stroke-width="2" stroke-linecap="round"/>
<circle cx="620.300" cy="373.600" r="9" fill="#bd141c" stroke="#2a0305" stroke-width="1.800"/>
<circle cx="606" cy="388.700" r="8.800" fill="#bd141c" stroke="#2a0305" stroke-width="1.800"/>
<ellipse cx="622.500" cy="370.500" rx="3" ry="2" fill="#e0525a" opacity=".8"/>
<ellipse cx="608.500" cy="385.500" rx="3" ry="2" fill="#e0525a" opacity=".8"/>
<text x="487.300" y="278.500" font-family="Liberation Sans, sans-serif" font-size="28.600" textLength="89" lengthAdjust="spacingAndGlyphs" fill="#a4f48a" stroke="#3be850" stroke-width="2" paint-order="stroke" stroke-linejoin="round">Chanh</text></svg>
<div style="left:809.6px;top:154.5px;width:2.4px;height:53px;background:#c41a1a;"></div>
<div style="left:884px;top:154.5px;width:2.4px;height:53px;background:#c41a1a;"></div>
<div style="left:791px;top:207.5px;width:118px;height:3px;background:#262626;"></div>
<div style="left:791px;top:211px;width:118px;height:11px;background:linear-gradient(#383838,#2e2e2e);"></div>
<span class="t" style="left:791px;top:213.5px;font-size:6.1px;color:#bdbdbd;width:101px;text-align:center">Lớp</span>
<svg style="left:890px;top:213px;width:16px;height:8px" viewBox="0 0 16 8"><rect x="0.500" y="2.500" width="4.500" height="4.500" stroke="#aaa" stroke-width="0.800" fill="none"/><path d="M3 4.500l3-3M4 1.200h2.200v2.200" stroke="#aaa" stroke-width="0.800" fill="none"/><path d="M10.500 1.800l4 4.400M14.500 1.800l-4 4.400" stroke="#d0d0d0" stroke-width="1.300"/></svg>
<span class="t" style="left:794.5px;top:227.8px;font-size:5.8px;color:#c4c4c4;">Độ trong</span>
<div style="left:822.5px;top:225.5px;width:63px;height:8.5px;background:linear-gradient(90deg,#7cc2f6,#4a8fd2);border-radius:1px"></div>
<span class="t" style="left:889px;top:227.8px;font-size:5.8px;color:#c4c4c4;">100 %</span>
<span class="t" style="left:794.5px;top:240.6px;font-size:5.8px;color:#c4c4c4;">Pha trộn</span>
<div style="left:824.5px;top:238px;width:81px;height:10px;background:#424242;border:1px solid #484848"></div>
<span class="t" style="left:827px;top:240.6px;font-size:5.8px;color:#b0b0b0;">Bình thường</span>
<svg style="left:899px;top:241.5px;width:5px;height:4px" viewBox="0 0 5 4"><path d="M.5 .8l2 2.400 2-2.400z" fill="#888"/></svg>
<svg style="left:796px;top:253.5px;width:7px;height:6.5px" viewBox="0 0 7 6.5"><rect x="0.500" y="0.500" width="6" height="5.500" stroke="#bdbdbd" stroke-width="0.700" fill="none"/></svg>
<span class="t" style="left:805.5px;top:254.5px;font-size:5.8px;color:#c4c4c4;">Bảo vệ alpha</span>
<svg style="left:844.5px;top:253.5px;width:7px;height:6.5px" viewBox="0 0 7 6.5"><rect x="0.500" y="0.500" width="6" height="5.500" stroke="#bdbdbd" stroke-width="0.700" fill="none"/></svg>
<span class="t" style="left:853.5px;top:254.5px;font-size:5.8px;color:#c4c4c4;">Xén bớt</span>
<svg style="left:880px;top:253.5px;width:7px;height:6.5px" viewBox="0 0 7 6.5"><rect x="0.500" y="0.500" width="6" height="5.500" stroke="#bdbdbd" stroke-width="0.700" fill="none"/></svg>
<span class="t" style="left:888.5px;top:254.5px;font-size:5.8px;color:#c4c4c4;">Khóa</span>
<div style="left:793px;top:264.5px;width:104px;height:88px;background:#414141;"></div>
<div style="left:793px;top:265px;width:104px;height:20.3px;background:#4c4c4c;"></div>
<div style="left:795px;top:272.5px;width:5px;height:5px;background:#e6e6e6;border-radius:50%"></div>
<span class="t" style="left:838px;top:271.3px;font-size:7.3px;color:#e0e0e0;">Chanh</span>
<div style="left:793px;top:286px;width:104px;height:20.3px;background:#4c4c4c;"></div>
<div style="left:803px;top:286px;width:94px;height:20.3px;background:#4a92d4;"></div>
<div style="left:795px;top:293.5px;width:5px;height:5px;background:#e6e6e6;border-radius:50%"></div>
<span class="t" style="left:838px;top:292.3px;font-size:7.3px;color:#fff;font-weight:bold">Lớp2</span>
<div style="left:793px;top:307px;width:104px;height:20.3px;background:#4c4c4c;"></div>
<div style="left:795px;top:314.5px;width:5px;height:5px;background:#e6e6e6;border-radius:50%"></div>
<span class="t" style="left:838px;top:313.3px;font-size:7.3px;color:#e0e0e0;">Lớp1</span>
<div style="left:811px;top:272.5px;width:18px;height:4.5px;background:#3ecf4e;"></div>
<span class="t" style="left:811.500px;top:272.800px;font-size:4px;color:#e8ffe8;font-weight:bold;letter-spacing:-.2px">Chanh</span>
<div style="left:811px;top:272.5px;width:18px;height:4.5px;background:transparent;border:.5px solid #3a3"></div>
<svg style="left:810.500px;top:287px;width:19px;height:18.500px" viewBox="0 0 19 18.500"><rect width="19" height="18.500" fill="#edc5aa"/><ellipse cx="9" cy="11.500" rx="6.500" ry="5.500" fill="#fff" opacity=".9"/><path d="M13 12l4-2-1 6-5 1z" fill="#e089ab"/></svg>
<svg style="left:810.500px;top:308px;width:19px;height:18.500px" viewBox="0 0 19 18.500"><defs><pattern id="ck2" width="4" height="4" patternUnits="userSpaceOnUse"><rect width="4" height="4" fill="#fff"/><rect width="2" height="2" fill="#ddd"/><rect x="2" y="2" width="2" height="2" fill="#ddd"/></pattern></defs><rect width="19" height="18.500" fill="url(#ck2)"/><ellipse cx="9.500" cy="10" rx="5.500" ry="5" fill="none" stroke="#222" stroke-width=".7"/><path d="M3 15c2-2 4-2 6-1 3 1 5 0 6-2" stroke="#222" stroke-width=".7" fill="none"/><circle cx="9" cy="10" r="1.200" fill="#c22"/><path d="M9 5l1-2" stroke="#3a3" stroke-width="1"/></svg>
<svg style="left:885.5px;top:291.5px;width:9px;height:9px" viewBox="0 0 9 9"><circle cx="4.500" cy="4.500" r="2.300" stroke="#fff" stroke-width="1.700" fill="none"/><path d="M4.500 .3v8.400M.3 4.500h8.400M1.500 1.500l6 6M7.500 1.500l-6 6" stroke="#fff" stroke-width="1.200"/><circle cx="4.500" cy="4.500" r="1.200" fill="#4a92d4"/></svg>
<div style="left:898px;top:264.5px;width:8.5px;height:88.5px;background:#2e2e2e;"></div>
<div style="left:899px;top:271px;width:6.5px;height:76px;background:#6c6c6c;border-radius:2.500px"></div>
<svg style="left:899px;top:265px;width:6px;height:5px" viewBox="0 0 6 5"><path d="M1 4l2-3 2 3z" fill="#bbb"/></svg>
<svg style="left:899px;top:348px;width:6px;height:5px" viewBox="0 0 6 5"><path d="M1 1l2 3 2-3z" fill="#bbb"/></svg>
<svg style="left:794.4px;top:356.3px;width:11.6px;height:12.4px" viewBox="0 0 11.6 12.4"><rect x="0.500" y="0.500" width="10.6" height="11.4" rx="1.500" fill="#484848" stroke="#5c5c5c" stroke-width="0.800"/><path d="M3.300 2.200h3.500l2 2v5.800H3.300z" fill="none" stroke="#e6e6e6" stroke-width="0.900"/></svg>
<svg style="left:809px;top:356.3px;width:11.6px;height:12.4px" viewBox="0 0 11.6 12.4"><rect x="0.500" y="0.500" width="10.6" height="11.4" rx="1.500" fill="#484848" stroke="#5c5c5c" stroke-width="0.800"/><path d="M3.300 2.200h3.500l2 2v5.800H3.300z" fill="none" stroke="#e6e6e6" stroke-width="0.900"/><text x="6" y="8.800" text-anchor="middle" font-size="4" font-family="Liberation Sans, sans-serif" fill="#e6e6e6">8</text></svg>
<svg style="left:823px;top:356.3px;width:11.7px;height:12.4px" viewBox="0 0 11.7 12.4"><rect x="0.500" y="0.500" width="10.7" height="11.4" rx="1.500" fill="#484848" stroke="#5c5c5c" stroke-width="0.800"/><path d="M3.300 2.200h3.500l2 2v5.800H3.300z" fill="none" stroke="#e6e6e6" stroke-width="0.900"/><text x="6" y="8.800" text-anchor="middle" font-size="4" font-family="Liberation Sans, sans-serif" fill="#e6e6e6">1</text></svg>
<svg style="left:837px;top:356.3px;width:15px;height:12.4px" viewBox="0 0 15 12.4"><rect x="0.500" y="0.500" width="14" height="11.4" rx="1.500" fill="#484848" stroke="#5c5c5c" stroke-width="0.800"/><path d="M3.300 2.200h3.500l2 2v5.800H3.300z" fill="none" stroke="#e6e6e6" stroke-width="0.900"/><path d="M5 6.500h2.500M6.200 5.300v2.500" stroke="#e6e6e6" stroke-width=".7"/><path d="M11 5.500l1.300 1.800 1.300-1.800z" fill="#e6e6e6"/></svg>
<svg style="left:854.4px;top:356.3px;width:11.6px;height:12.4px" viewBox="0 0 11.6 12.4"><rect x="0.500" y="0.500" width="10.6" height="11.4" rx="1.500" fill="#484848" stroke="#5c5c5c" stroke-width="0.800"/><path d="M2 3.300h3.300l1 1.200H10V10H2z" fill="#e6e6e6"/></svg>
<svg style="left:872.5px;top:356.3px;width:12.2px;height:12.4px" viewBox="0 0 12.2 12.4"><rect x="0.500" y="0.500" width="11.2" height="11.4" rx="1.500" fill="#484848" stroke="#5c5c5c" stroke-width="0.800"/><rect x="2.500" y="4.300" width="5.500" height="5.500" fill="none" stroke="#e6e6e6" stroke-width="0.900"/><path d="M4.500 4.300V2.500H10V8H8" fill="none" stroke="#e6e6e6" stroke-width="0.900"/></svg>
<svg style="left:887px;top:356.3px;width:11.7px;height:12.4px" viewBox="0 0 11.7 12.4"><rect x="0.500" y="0.500" width="10.7" height="11.4" rx="1.500" fill="#484848" stroke="#5c5c5c" stroke-width="0.800"/><rect x="2.500" y="2.500" width="3" height="7.500" fill="#e6e6e6"/><path d="M6.500 4h3M6.500 8.500h3" stroke="#e6e6e6" stroke-width="1.300"/></svg>
<div style="left:869px;top:358px;width:1px;height:9px;background:#555;"></div>
<div style="left:902.8px;top:356.3px;width:4px;height:12.4px;background:#3a3a3a;"></div>
<div style="left:791px;top:375.3px;width:118px;height:10.5px;background:linear-gradient(#383838,#2e2e2e);"></div>
<div style="left:791px;top:374.3px;width:118px;height:1px;background:#3d6f98;"></div>
<span class="t" style="left:791px;top:377.8px;font-size:6.1px;color:#bdbdbd;width:101px;text-align:center">Brush Size</span>
<svg style="left:890px;top:377.3px;width:16px;height:8px" viewBox="0 0 16 8"><rect x="0.500" y="2.500" width="4.500" height="4.500" stroke="#aaa" stroke-width="0.800" fill="none"/><path d="M3 4.500l3-3M4 1.200h2.200v2.200" stroke="#aaa" stroke-width="0.800" fill="none"/><path d="M10.500 1.800l4 4.400M14.500 1.800l-4 4.400" stroke="#d0d0d0" stroke-width="1.300"/></svg>
<div style="left:791px;top:385.5px;width:107px;height:134px;background:#404040;"></div>
<svg style="left:791.2px;top:385.8px;width:106.500px;height:134px" viewBox="0 0 106.500 134"><rect x="0.5" y="0.5" width="20.2" height="25.5" fill="#5a5a5a"/><circle cx="10.6" cy="10.3" r="0.4" fill="#f0f0f0"/><text x="10.6" y="24.8" text-anchor="middle" font-family="Liberation Sans, sans-serif" font-size="4.800" fill="#e8e8e8">1</text><rect x="21.7" y="0.5" width="20.2" height="25.5" fill="#5a5a5a"/><circle cx="31.8" cy="10.3" r="0.5" fill="#f0f0f0"/><text x="31.8" y="24.8" text-anchor="middle" font-family="Liberation Sans, sans-serif" font-size="4.800" fill="#e8e8e8">1.5</text><rect x="42.9" y="0.5" width="20.2" height="25.5" fill="#5a5a5a"/><circle cx="53.0" cy="10.3" r="0.6" fill="#f0f0f0"/><text x="53.0" y="24.8" text-anchor="middle" font-family="Liberation Sans, sans-serif" font-size="4.800" fill="#e8e8e8">2</text><rect x="64.1" y="0.5" width="20.2" height="25.5" fill="#5a5a5a"/><circle cx="74.2" cy="10.3" r="0.8" fill="#f0f0f0"/><text x="74.2" y="24.8" text-anchor="middle" font-family="Liberation Sans, sans-serif" font-size="4.800" fill="#e8e8e8">3</text><rect x="85.3" y="0.5" width="20.2" height="25.5" fill="#5a5a5a"/><circle cx="95.4" cy="10.3" r="1" fill="#f0f0f0"/><text x="95.4" y="24.8" text-anchor="middle" font-family="Liberation Sans, sans-serif" font-size="4.800" fill="#e8e8e8">4</text><rect x="0.5" y="27.0" width="20.2" height="25.5" fill="#5a5a5a"/><circle cx="10.6" cy="36.8" r="1.2" fill="#f0f0f0"/><text x="10.6" y="51.3" text-anchor="middle" font-family="Liberation Sans, sans-serif" font-size="4.800" fill="#e8e8e8">5</text><rect x="21.7" y="27.0" width="20.2" height="25.5" fill="#5a5a5a"/><circle cx="31.8" cy="36.8" r="1.7" fill="#f0f0f0"/><text x="31.8" y="51.3" text-anchor="middle" font-family="Liberation Sans, sans-serif" font-size="4.800" fill="#e8e8e8">7</text><rect x="42.9" y="27.0" width="20.2" height="25.5" fill="#5a5a5a"/><circle cx="53.0" cy="36.8" r="2.4" fill="#f0f0f0"/><text x="53.0" y="51.3" text-anchor="middle" font-family="Liberation Sans, sans-serif" font-size="4.800" fill="#e8e8e8">10</text><rect x="64.1" y="27.0" width="20.2" height="25.5" fill="#5a5a5a"/><circle cx="74.2" cy="36.8" r="2.9" fill="#f0f0f0"/><text x="74.2" y="51.3" text-anchor="middle" font-family="Liberation Sans, sans-serif" font-size="4.800" fill="#e8e8e8">12</text><rect x="85.3" y="27.0" width="20.2" height="25.5" fill="#5a5a5a"/><circle cx="95.4" cy="36.8" r="3.7" fill="#f0f0f0"/><text x="95.4" y="51.3" text-anchor="middle" font-family="Liberation Sans, sans-serif" font-size="4.800" fill="#e8e8e8">15</text><rect x="0.5" y="53.5" width="20.2" height="25.5" fill="#5a5a5a"/><circle cx="10.6" cy="63.8" r="5.4" fill="#f0f0f0"/><text x="10.6" y="77.8" text-anchor="middle" font-family="Liberation Sans, sans-serif" font-size="4.800" fill="#e8e8e8">20</text><rect x="21.7" y="53.5" width="20.2" height="25.5" fill="#5a5a5a"/><circle cx="31.8" cy="63.8" r="6.4" fill="#f0f0f0"/><text x="31.8" y="77.8" text-anchor="middle" font-family="Liberation Sans, sans-serif" font-size="4.800" fill="#e8e8e8">25</text><rect x="42.9" y="53.5" width="20.2" height="25.5" fill="#5a5a5a"/><circle cx="53.0" cy="63.8" r="6.4" fill="#f0f0f0"/><text x="53.0" y="77.8" text-anchor="middle" font-family="Liberation Sans, sans-serif" font-size="4.800" fill="#e8e8e8">30</text><rect x="64.1" y="53.5" width="20.2" height="25.5" fill="#5a5a5a"/><circle cx="74.2" cy="63.8" r="6.4" fill="#f0f0f0"/><text x="74.2" y="77.8" text-anchor="middle" font-family="Liberation Sans, sans-serif" font-size="4.800" fill="#e8e8e8">40</text><rect x="85.3" y="53.5" width="20.2" height="25.5" fill="#5a5a5a"/><circle cx="95.4" cy="63.8" r="6.4" fill="#f0f0f0"/><text x="95.4" y="77.8" text-anchor="middle" font-family="Liberation Sans, sans-serif" font-size="4.800" fill="#e8e8e8">50</text><rect x="0.5" y="80.0" width="20.2" height="25.5" fill="#5a5a5a"/><circle cx="10.6" cy="90.3" r="6.2" fill="#f0f0f0"/><text x="10.6" y="104.3" text-anchor="middle" font-family="Liberation Sans, sans-serif" font-size="4.800" fill="#e8e8e8">70</text><rect x="21.7" y="80.0" width="20.2" height="25.5" fill="#5a5a5a"/><circle cx="31.8" cy="90.3" r="6.4" fill="#f0f0f0"/><text x="31.8" y="104.3" text-anchor="middle" font-family="Liberation Sans, sans-serif" font-size="4.800" fill="#e8e8e8">100</text><rect x="42.9" y="80.0" width="20.2" height="25.5" fill="#5a5a5a"/><circle cx="53.0" cy="90.3" r="6.4" fill="#f0f0f0"/><text x="53.0" y="104.3" text-anchor="middle" font-family="Liberation Sans, sans-serif" font-size="4.800" fill="#e8e8e8">150</text><rect x="64.1" y="80.0" width="20.2" height="25.5" fill="#5a5a5a"/><circle cx="74.2" cy="90.3" r="6.4" fill="#f0f0f0"/><text x="74.2" y="104.3" text-anchor="middle" font-family="Liberation Sans, sans-serif" font-size="4.800" fill="#e8e8e8">200</text><rect x="85.3" y="80.0" width="20.2" height="25.5" fill="#5a5a5a"/><circle cx="95.4" cy="90.3" r="6.4" fill="#f0f0f0"/><text x="95.4" y="104.3" text-anchor="middle" font-family="Liberation Sans, sans-serif" font-size="4.800" fill="#e8e8e8">300</text><rect x="0.5" y="106.5" width="20.2" height="25.5" fill="#5a5a5a"/><circle cx="10.6" cy="116.8" r="6.4" fill="#f0f0f0"/><text x="10.6" y="130.8" text-anchor="middle" font-family="Liberation Sans, sans-serif" font-size="4.800" fill="#e8e8e8">400</text><rect x="21.7" y="106.5" width="20.2" height="25.5" fill="#5a5a5a"/><circle cx="31.8" cy="116.8" r="6.4" fill="#f0f0f0"/><text x="31.8" y="130.8" text-anchor="middle" font-family="Liberation Sans, sans-serif" font-size="4.800" fill="#e8e8e8">500</text><rect x="42.9" y="106.5" width="20.2" height="25.5" fill="#5a5a5a"/><circle cx="53.0" cy="116.8" r="6.4" fill="#f0f0f0"/><text x="53.0" y="130.8" text-anchor="middle" font-family="Liberation Sans, sans-serif" font-size="4.800" fill="#e8e8e8">700</text><rect x="64.1" y="106.5" width="20.2" height="25.5" fill="#5a5a5a"/><circle cx="74.2" cy="116.8" r="6.4" fill="#f0f0f0"/><text x="74.2" y="130.8" text-anchor="middle" font-family="Liberation Sans, sans-serif" font-size="4.800" fill="#e8e8e8">1000</text><rect x="85.3" y="106.5" width="20.2" height="25.5" fill="#4a4a4a"/></svg>
<div style="left:791px;top:518.3px;width:107px;height:12px;background:#4c4c4c;"></div>
<div style="left:898.5px;top:385.5px;width:9.5px;height:144px;background:#3a3a3a;"></div>
<div style="left:899.5px;top:391px;width:7.5px;height:132px;background:#7a7a7a;border-radius:2.500px"></div>
<svg style="left:900px;top:386px;width:7px;height:5px" viewBox="0 0 7 5"><path d="M1 4l2.500-3 2.500 3z" fill="#ccc"/></svg>
<svg style="left:900px;top:524px;width:7px;height:5px" viewBox="0 0 7 5"><path d="M1 1l2.500 3 2.500-3z" fill="#ccc"/></svg>
<svg style="left:901px;top:533px;width:8px;height:8px" viewBox="0 0 8 8"><path d="M7.500 1L1 7.500M7.500 3.500l-4 4M7.500 6L6 7.500" stroke="#777" stroke-width=".8"/></svg>
<span class="t" style="left:853.500px;top:506px;font-size:11.300px;color:rgba(255,255,255,.4)">Activate Windows</span>
<span class="t" style="left:853.500px;top:519.800px;font-size:7.800px;color:rgba(255,255,255,.36)">Go to Settings to activate Windows</span>
<div id="taskbar"></div>
<div style="left:0;top:555px;width:26px;height:21px;background:#2a2929"></div>
<svg style="left:8px;top:561px;width:10px;height:10px" viewBox="0 0 10 10"><path d="M0 1.400l4.300-.7v4H0zM4.900.6L10 0v4.700H4.900zM0 5.300h4.300v4L0 8.600zM4.900 5.300H10V10l-5.100-.7z" fill="#fff"/></svg>
<div style="left:26px;top:555px;width:183px;height:21px;background:#f2f3f5"></div>
<svg style="left:32px;top:560px;width:11px;height:11px" viewBox="0 0 11 11"><circle cx="6.500" cy="4.300" r="3" stroke="#222" stroke-width="0.900" fill="none"/><path d="M4.300 6.500L1 10" stroke="#222" stroke-width="0.900"/></svg>
<span class="t" style="left:47px;top:562px;font-size:8px;color:#333">Nhập tại đây để tìm kiếm</span>
<svg style="left:216px;top:560px;width:12px;height:10px" viewBox="0 0 12 10"><rect x="1" y="2" width="7" height="1.800" fill="#fff"/><rect x="1" y="6" width="7" height="1.800" fill="#fff"/><rect x="9.300" y="1" width="1.300" height="8" fill="#fff"/><rect x="1" y="0.500" width="1" height="1" fill="#fff"/></svg>
<svg style="left:241.5px;top:558px;width:14px;height:14px" viewBox="0 0 14 14"><ellipse cx="7" cy="7" rx="4.600" ry="5.300" fill="none" stroke="#e8152c" stroke-width="2.800"/></svg>
<svg style="left:267px;top:558px;width:14px;height:14px" viewBox="0 0 14 14"><path d="M1 3h5l1 1.500h6V12H1z" fill="#f4c23c"/><rect x="1" y="6" width="12" height="6" fill="#fbd866"/><rect x="3" y="9" width="8" height="3" fill="#3e8ede"/></svg>
<svg style="left:294px;top:558px;width:14px;height:14px" viewBox="0 0 14 14"><circle cx="7" cy="7" r="6" fill="#1f88d8"/><path d="M2 8c0-4 8-5 10-1-2-1-6-1-6 2 0 2 3 3 5 2-3 3-9 1-9-3z" fill="#47d0a0"/><path d="M6 9c0-3 4-3 6-2 0 2-2 3-3 3-2 0-3-.3-3-1z" fill="#0f5fae"/></svg>
<svg style="left:320.5px;top:558px;width:14px;height:14px" viewBox="0 0 14 14"><rect x="1" y="3.500" width="12" height="8" rx="1" fill="#1c7fd6"/><path d="M1.500 4.500L7 8.500l5.500-4" stroke="#fff" stroke-width="1.200" fill="none"/></svg>
<svg style="left:348px;top:558px;width:14px;height:14px" viewBox="0 0 14 14"><circle cx="7" cy="7" r="6" fill="#8cc63f"/><circle cx="7" cy="7" r="3.800" fill="#fff"/><circle cx="7" cy="7" r="2" fill="#58a618"/><path d="M9 2l3-1-1 3z" fill="#fff"/></svg>
<svg style="left:373px;top:558px;width:14px;height:14px" viewBox="0 0 14 14"><rect x="1" y="2" width="12" height="10" rx="3" fill="#3a78f2"/><rect x="3.500" y="5" width="5" height="4" rx=".8" fill="#fff"/><path d="M8.800 7l2.200-1.600v3.200z" fill="#fff"/></svg>
<svg style="left:399px;top:558px;width:14px;height:14px" viewBox="0 0 14 14"><circle cx="7" cy="7" r="6" fill="#e33b2e"/><path d="M7 7L1.800 4A6 6 0 0 0 7 13z" fill="#31a950"/><path d="M7 7l0 6a6 6 0 0 0 5.200-9z" fill="#fbc016"/><circle cx="7" cy="7" r="2.700" fill="#fff"/><circle cx="7" cy="7" r="2" fill="#4285f4"/></svg>
<svg style="left:424px;top:558px;width:14px;height:14px" viewBox="0 0 14 14"><rect x="1" y="1.500" width="12" height="11" rx="3.500" fill="#fff"/><rect x="2" y="2.500" width="10" height="8" rx="2.500" fill="#2f7df6"/><rect x="3.500" y="5" width="7" height="2.200" fill="#fff"/></svg>
<svg style="left:450.5px;top:558px;width:14px;height:14px" viewBox="0 0 14 14"><ellipse cx="7" cy="7.500" rx="5.500" ry="4.500" fill="#d8d2c4"/><circle cx="4.500" cy="6.500" r="1" fill="#d33"/><circle cx="7" cy="5.300" r="1" fill="#3a3"/><circle cx="9.500" cy="6.500" r="1" fill="#36c"/><path d="M9 10.500L13 2l.8.600L10 11z" fill="#8b6a3c"/></svg>
<div style="left:472px;top:555px;width:25px;height:21px;background:#4a4b52"></div>
<svg style="left:477.5px;top:558px;width:14px;height:14px" viewBox="0 0 14 14"><rect x="1" y="1" width="12" height="12" rx="1.500" fill="#fff"/><circle cx="7" cy="7" r="4.200" fill="#f7f7f7" stroke="#ddd" stroke-width=".4"/><path d="M7 2.800A4.200 4.200 0 0 0 2.800 7H7z" fill="#e24a4a"/><path d="M2.800 7a4.200 4.200 0 0 0 6.400 3.600L7 7z" fill="#35a853"/><circle cx="8.300" cy="6.300" r="1.600" fill="#f3c531"/></svg>
<div style="left:238.5px;top:575px;width:20px;height:1px;background:#8ab4e8"></div>
<div style="left:345px;top:575px;width:20px;height:1px;background:#8ab4e8"></div>
<div style="left:370px;top:575px;width:20px;height:1px;background:#8ab4e8"></div>
<div style="left:396px;top:575px;width:20px;height:1px;background:#8ab4e8"></div>
<div style="left:421px;top:575px;width:20px;height:1px;background:#8ab4e8"></div>
<div style="left:447.5px;top:575px;width:20px;height:1px;background:#8ab4e8"></div>
<div style="left:472px;top:575px;width:25px;height:1px;background:#9cc3f0"></div>
<svg style="left:916px;top:561px;width:36px;height:10px" viewBox="0 0 36 10"><path d="M1 6.500l3-3 3 3" stroke="#fff" stroke-width="0.900" fill="none"/><path d="M12 4h1.500l2-2v6l-2-2H12z" stroke="#fff" stroke-width="0.700" fill="none"/><path d="M17.300 3.800l2.200 2.400M19.500 3.800l-2.200 2.400" stroke="#fff" stroke-width="0.700"/></svg>
<span class="t" style="left:944px;top:562px;font-size:6.300px;color:#fff">VIE</span>
<span class="t" style="left:964px;top:557px;width:26px;text-align:center;font-size:6.800px;color:#fff">8:01 CH</span>
<span class="t" style="left:958px;top:566.500px;width:38px;text-align:center;font-size:6.800px;color:#fff">08/05/2021</span>
<svg style="left:1001px;top:560px;width:11px;height:11px" viewBox="0 0 11 11"><path d="M1 1.500h9v6.500H6.500L4.500 10V8H1z" stroke="#fff" stroke-width="0.900" fill="none"/></svg>
</div>
</body>
</html>
